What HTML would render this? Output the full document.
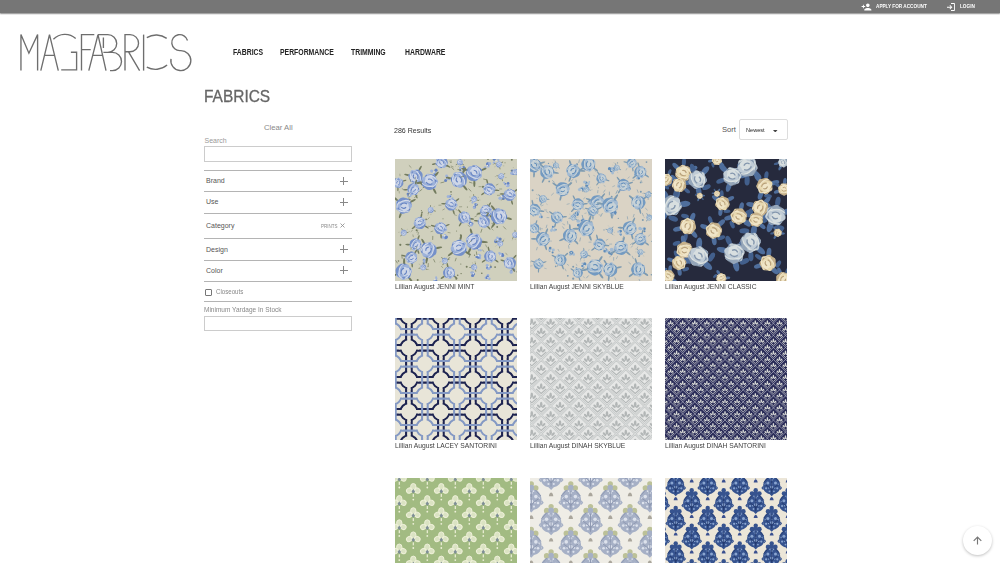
<!DOCTYPE html>
<html><head><meta charset="utf-8">
<style>
*{margin:0;padding:0;box-sizing:border-box}
html,body{width:1000px;height:563px;overflow:hidden;background:#fff;font-family:"Liberation Sans",sans-serif;position:relative}
.a{position:absolute;white-space:nowrap}
svg{display:block}
#topbar{position:absolute;left:0;top:0;width:1000px;height:12.6px;background:#767676;box-shadow:0 .8px 1.2px rgba(0,0,0,.45)}
.tb{color:#fff;font-size:5.5px;font-weight:bold;top:2.9px;transform:scaleX(.85);transform-origin:0 0}
.nav{font-size:8.4px;font-weight:bold;color:#222;top:47px;transform:scaleX(.82);transform-origin:0 0}
.side{color:#555;font-size:7px}
.hr{position:absolute;left:204px;width:148px;height:1px;background:#b4b4b4}
.plus{position:absolute;width:8px;height:8px}
.plus:before{content:"";position:absolute;left:3px;top:0;width:1px;height:7.5px;background:#888}
.plus:after{content:"";position:absolute;left:0;top:3.5px;width:7.5px;height:1px;background:#888}
.img{position:absolute;width:122px;height:122px;overflow:hidden}
.lbl{font-size:7.4px;color:#404040;transform:scaleX(.91);transform-origin:0 0}
</style></head><body>
<div id="topbar"></div>
<svg class="a" style="left:861px;top:3px" width="11" height="8" viewBox="0 0 24 18"><path fill="#fff" d="M15 9c2.2 0 4-1.8 4-4s-1.8-4-4-4-4 1.8-4 4 1.8 4 4 4zM6 7V4H4v3H1v2h3v3h2V9h3V7H6zm9 4c-2.7 0-8 1.3-8 4v2h16v-2c0-2.7-5.3-4-8-4z"/></svg>
<div class="a tb" style="left:875.5px">APPLY FOR ACCOUNT</div>
<svg class="a" style="left:946.5px;top:2.5px" width="8" height="8" viewBox="0 0 18 18"><path fill="#fff" d="M7 4.5L5.6 5.9 8.2 8.5H0v2h8.2l-2.6 2.6L7 14.5l5-5-5-5zM16 16H9v2h7c1.1 0 2-.9 2-2V2c0-1.1-.9-2-2-2H9v2h7v14z"/></svg>
<div class="a tb" style="left:960px">LOGIN</div>

<svg class="a" style="left:0;top:0" width="200" height="80" viewBox="0 0 200 80"><g fill="none" stroke="#6e6e6e" stroke-width="1.35" stroke-linecap="butt" stroke-linejoin="miter">
<path d="M20.95 70.6V34.6L28.9 53.2L37.6 34.6V70.6"/>
<path d="M40.8 70.6L49.5 34.6L58.3 70.6M44.5 55.4H54.6"/>
<path d="M53.4 39.2A16.2 16.2 0 0 1 75.7 38.4M61.2 69.9H76.6V52.2H70.9"/>
<path d="M94.3 34.6H81.5V70.4M81.5 49.6H90.7"/>
<path d="M88.8 70.6L98 34.6L106 70.6M92.7 55.4H102.6"/>
<path d="M98 34.6H107.8A8.9 8.9 0 0 1 107.8 52.4H103.4M103.4 37.6V48M103.4 52.4H112.4A9.1 9.1 0 0 1 112.4 70.6H110"/>
<path d="M125 70.6V34.6H130A8.55 8.55 0 0 1 130 51.7H125M128.4 51.7L139.6 70.6"/>
<path d="M143.6 34.6V70.6"/>
<path d="M146.8 37.6A18 18 0 0 1 166.7 38.4M146.8 67.1A18 18 0 0 0 167.1 65.1"/>
<path d="M187.5 40.5A8 8 0 1 0 180.3 50.6A10 10 0 1 1 171 58.8"/>
</g></svg>

<div class="a nav" style="left:233.2px">FABRICS</div>
<div class="a nav" style="left:279.5px">PERFORMANCE</div>
<div class="a nav" style="left:351.4px">TRIMMING</div>
<div class="a nav" style="left:405.4px">HARDWARE</div>

<div class="a" style="left:204.3px;top:87.2px;font-size:17px;color:#666;-webkit-text-stroke:.3px #666;transform:scaleX(.91);transform-origin:0 0">FABRICS</div>

<div class="a side" style="left:264px;top:123px;font-size:7.7px;color:#888">Clear All</div>
<div class="a side" style="left:204.5px;top:137px;color:#999">Search</div>
<div class="a" style="left:204px;top:146px;width:148px;height:16px;border:1px solid #ccc"></div>

<div class="hr" style="top:170px"></div>
<div class="a side" style="left:206px;top:177px">Brand</div>
<div class="plus" style="left:340px;top:177px"></div>
<div class="hr" style="top:191px"></div>
<div class="a side" style="left:206px;top:198px">Use</div>
<div class="plus" style="left:340px;top:198px"></div>
<div class="hr" style="top:212.5px;height:1.5px"></div>
<div class="a side" style="left:206px;top:222px">Category</div>
<div class="a" style="left:321.3px;top:222.8px;font-size:5px;color:#888;transform:scaleX(.9);transform-origin:0 0">PRINTS</div>
<svg class="a" style="left:340px;top:223.3px" width="5" height="5" viewBox="0 0 5 5"><path d="M.5 .5L4.5 4.5M4.5 .5L.5 4.5" stroke="#888" stroke-width=".8"/></svg>
<div class="hr" style="top:238px"></div>
<div class="a side" style="left:206px;top:246px">Design</div>
<div class="plus" style="left:340px;top:245px"></div>
<div class="hr" style="top:259.5px"></div>
<div class="a side" style="left:206px;top:267px">Color</div>
<div class="plus" style="left:340px;top:266px"></div>
<div class="hr" style="top:281px"></div>
<div class="a" style="left:204.5px;top:288.5px;width:7px;height:7px;border:1px solid #777;border-radius:1px"></div>
<div class="a side" style="left:215.5px;top:288.3px;color:#888;font-size:6.6px;transform:scaleX(.93);transform-origin:0 0">Closeouts</div>
<div class="hr" style="top:300.5px"></div>
<div class="a side" style="left:204px;top:306.2px;color:#888;transform:scaleX(.93);transform-origin:0 0">Minimum Yardage In Stock</div>
<div class="a" style="left:204px;top:315.5px;width:148px;height:15px;border:1px solid #ccc"></div>

<div class="a" style="left:394px;top:125.5px;font-size:7.6px;color:#333;transform:scaleX(.93);transform-origin:0 0">286 Results</div>
<div class="a" style="left:722px;top:125.3px;font-size:7.6px;color:#555">Sort</div>
<div class="a" style="left:739.3px;top:119.2px;width:48.7px;height:20.9px;border:1px solid #ddd;border-radius:2px"></div>
<div class="a" style="left:746px;top:126.8px;font-size:6px;color:#222;transform:scaleX(.93);transform-origin:0 0">Newest</div>
<svg class="a" style="left:773px;top:129.5px" width="4.5" height="2.5" viewBox="0 0 4.5 2.5"><path d="M0 0H4.5L2.25 2.5Z" fill="#444"/></svg>

<div class="img" style="left:395px;top:159px"><svg width="122" height="122" viewBox="0 0 122 122"><defs><g id="rm"><ellipse cx="-11" cy="6" rx="4.5" ry="1.3" fill="#737b5e" transform="rotate(-30 -11 6)"/><ellipse cx="10" cy="8" rx="4.5" ry="1.3" fill="#737b5e" transform="rotate(40 10 8)"/><ellipse cx="4" cy="-12" rx="4" ry="1.3" fill="#737b5e" transform="rotate(-70 4 -12)"/><path d="M-13 10L-17 13M13 -4L17 -7M-5 12L-7 16" stroke="#737b5e" stroke-width=".8"/><path d="M9.2 0L9.4 1.4L9.7 3L9.5 4.6L8.4 5.7L7 6.5L5.8 7.2L4.8 8.3L3.7 9.5L2.3 10.2L0.8 10.2L-0.7 9.5L-2.1 9L-3.5 8.9L-5.1 8.8L-6.5 8.2L-7.5 6.9L-7.9 5.4L-8.3 4L-9.1 2.8L-10.1 1.5L-10.5 0L-10.1 -1.5L-9.1 -2.8L-8.3 -4L-7.9 -5.4L-7.5 -6.9L-6.5 -8.2L-5.1 -8.8L-3.5 -8.9L-2.1 -9L-0.7 -9.5L0.8 -10.2L2.3 -10.2L3.7 -9.5L4.8 -8.3L5.8 -7.2L7 -6.5L8.4 -5.7L9.5 -4.6L9.7 -3L9.4 -1.4L9.2 -0Z" fill="#9db2da"/><path d="M-10 1A10 10 0 0 0 8 6Q2 4 -2 7Q-6 6 -10 1Z" fill="#6482c2" opacity=".7"/><path d="M4.4 1.9L4.2 2.9L3.9 4.2L3.1 5.1L1.9 5.4L0.6 5.1L-0.4 4.8L-1.5 4.9L-2.8 5L-3.9 4.5L-4.5 3.4L-4.6 2.2L-4.7 1.1L-5.1 0.1L-5.6 -1.1L-5.5 -2.3L-4.7 -3.3L-3.5 -3.7L-2.5 -4.1L-1.7 -4.8L-0.7 -5.7L0.5 -6L1.7 -5.5L2.5 -4.5L3.1 -3.6L4.1 -3.1L5.2 -2.4L5.8 -1.4L5.7 -0.1L5 1L4.4 1.9Z" fill="#e2e5ec" opacity=".7" transform="translate(-1.5 -2)"/><path d="M-8 -4Q-4 -10 4 -9M5 -6Q10 -1 7 6M-3 -2Q0 -5 3 -2M-4 2Q0 5 4 1" stroke="#6482c2" stroke-width="1.4" fill="none"/><path d="M-6.5 -6.5Q0 -10 6.5 -5.5M-8 5Q-2 9 6 3M8 -3Q9 1 6 4" stroke="#e2e5ec" stroke-width="1.3" fill="none" opacity=".85"/></g><filter id="bl5" x="-5%" y="-5%" width="110%" height="110%"><feGaussianBlur stdDeviation="0.5"/></filter></defs><g filter="url(#bl5)"><rect x="-5" y="-5" width="132" height="132" fill="#d0d0bd"/><circle cx="16.4" cy="103.4" r="1" fill="#737b5e"/><circle cx="31.1" cy="60.4" r="0.8" fill="#737b5e"/><circle cx="79.5" cy="96.2" r="0.6" fill="#737b5e"/><circle cx="3.5" cy="102" r="0.8" fill="#737b5e"/><circle cx="93" cy="0.3" r="0.8" fill="#737b5e"/><circle cx="88" cy="27.9" r="1.1" fill="#737b5e"/><circle cx="110" cy="3.7" r="0.5" fill="#737b5e"/><circle cx="66.1" cy="114.6" r="0.7" fill="#737b5e"/><circle cx="26.4" cy="51.5" r="0.5" fill="#737b5e"/><circle cx="27" cy="53.4" r="0.8" fill="#737b5e"/><circle cx="28.4" cy="28.2" r="0.6" fill="#737b5e"/><circle cx="56.1" cy="35.4" r="0.5" fill="#737b5e"/><circle cx="102.2" cy="67.9" r="0.9" fill="#737b5e"/><circle cx="22.7" cy="121.1" r="1" fill="#737b5e"/><circle cx="14.7" cy="40.6" r="0.9" fill="#737b5e"/><circle cx="86.8" cy="114.2" r="0.8" fill="#737b5e"/><circle cx="101.3" cy="81.8" r="0.7" fill="#737b5e"/><circle cx="71.7" cy="107.7" r="1" fill="#737b5e"/><circle cx="61.6" cy="71.9" r="0.5" fill="#737b5e"/><circle cx="29.6" cy="97.3" r="0.7" fill="#737b5e"/><circle cx="21.1" cy="67" r="0.9" fill="#737b5e"/><circle cx="82.3" cy="45.7" r="0.8" fill="#737b5e"/><circle cx="62" cy="95" r="0.8" fill="#737b5e"/><circle cx="48" cy="59.7" r="0.5" fill="#737b5e"/><circle cx="5.3" cy="85.8" r="1.1" fill="#737b5e"/><circle cx="72.4" cy="48" r="0.6" fill="#737b5e"/><circle cx="61.3" cy="119.8" r="1" fill="#737b5e"/><circle cx="65.8" cy="105" r="0.6" fill="#737b5e"/><circle cx="62.7" cy="116.2" r="0.8" fill="#737b5e"/><circle cx="56" cy="32.9" r="0.8" fill="#737b5e"/><circle cx="116.8" cy="0.7" r="1" fill="#737b5e"/><circle cx="100.1" cy="108.1" r="0.9" fill="#737b5e"/><circle cx="98.7" cy="63.3" r="0.8" fill="#737b5e"/><circle cx="52" cy="6.8" r="1" fill="#737b5e"/><circle cx="69.5" cy="24.4" r="0.8" fill="#737b5e"/><circle cx="59.2" cy="43.5" r="0.7" fill="#737b5e"/><circle cx="65.7" cy="76.1" r="0.9" fill="#737b5e"/><circle cx="55.9" cy="3.4" r="0.6" fill="#737b5e"/><circle cx="21.6" cy="71.3" r="1" fill="#737b5e"/><circle cx="97.4" cy="97.2" r="1" fill="#737b5e"/><circle cx="32" cy="100.6" r="0.9" fill="#9db2da"/><circle cx="28.7" cy="104" r="1.1" fill="#6482c2"/><circle cx="29.2" cy="103.3" r="1.2" fill="#9db2da"/><circle cx="29" cy="101" r="1.3" fill="#6482c2"/><circle cx="29.5" cy="101.6" r="1.5" fill="#9db2da"/><circle cx="31.1" cy="102.7" r=".7" fill="#e2e5ec"/><circle cx="55.3" cy="36.9" r="1.2" fill="#9db2da"/><circle cx="55.1" cy="37.7" r="1" fill="#6482c2"/><circle cx="57.5" cy="39.3" r="1.1" fill="#9db2da"/><circle cx="56" cy="40.9" r="0.9" fill="#6482c2"/><circle cx="53.1" cy="37.5" r="1.5" fill="#9db2da"/><circle cx="55.5" cy="39.3" r=".7" fill="#e2e5ec"/><circle cx="20.4" cy="86.2" r="1.1" fill="#9db2da"/><circle cx="21.9" cy="87.5" r="1.3" fill="#6482c2"/><circle cx="18.2" cy="86.7" r="1.2" fill="#9db2da"/><circle cx="19.9" cy="85.1" r="1.4" fill="#6482c2"/><circle cx="17.3" cy="85" r="1.7" fill="#9db2da"/><circle cx="19.5" cy="86" r=".7" fill="#e2e5ec"/><circle cx="108.6" cy="36.4" r="1.7" fill="#9db2da"/><circle cx="108" cy="37" r="1.1" fill="#6482c2"/><circle cx="104.4" cy="39.3" r="0.9" fill="#9db2da"/><circle cx="108.4" cy="39.7" r="1.4" fill="#6482c2"/><circle cx="105.2" cy="39.2" r="1.7" fill="#9db2da"/><circle cx="106.8" cy="37.4" r=".7" fill="#e2e5ec"/><circle cx="85.3" cy="61.3" r="1.1" fill="#9db2da"/><circle cx="86.8" cy="61.7" r="1.1" fill="#6482c2"/><circle cx="83.9" cy="62.9" r="1.1" fill="#9db2da"/><circle cx="85.9" cy="61.2" r="1.6" fill="#6482c2"/><circle cx="87.9" cy="59.7" r="1.1" fill="#9db2da"/><circle cx="85.9" cy="62.1" r=".7" fill="#e2e5ec"/><circle cx="41.4" cy="119.6" r="1.1" fill="#9db2da"/><circle cx="40.9" cy="122.1" r="1.6" fill="#6482c2"/><circle cx="39.2" cy="122.3" r="1.4" fill="#9db2da"/><circle cx="39.9" cy="122.8" r="1.1" fill="#6482c2"/><circle cx="41.1" cy="118.3" r="1" fill="#9db2da"/><circle cx="40" cy="120.4" r=".7" fill="#e2e5ec"/><circle cx="112.4" cy="26.5" r="1.6" fill="#9db2da"/><circle cx="110.5" cy="25.2" r="1.1" fill="#6482c2"/><circle cx="113" cy="26.5" r="1.7" fill="#9db2da"/><circle cx="113.1" cy="24.2" r="1.3" fill="#6482c2"/><circle cx="109.2" cy="23.7" r="1" fill="#9db2da"/><circle cx="111.1" cy="26" r=".7" fill="#e2e5ec"/><circle cx="107.3" cy="95.4" r="1.4" fill="#9db2da"/><circle cx="107.1" cy="95.5" r="1.4" fill="#6482c2"/><circle cx="104.3" cy="94.1" r="1.1" fill="#9db2da"/><circle cx="107.6" cy="96.5" r="1.6" fill="#6482c2"/><circle cx="105.5" cy="95" r="1.5" fill="#9db2da"/><circle cx="105.7" cy="96.2" r=".7" fill="#e2e5ec"/><circle cx="101.8" cy="-0.5" r="1" fill="#9db2da"/><circle cx="102.9" cy="-0.8" r="1.1" fill="#6482c2"/><circle cx="103.4" cy="1.1" r="1" fill="#9db2da"/><circle cx="99.3" cy="0.2" r="1.5" fill="#6482c2"/><circle cx="99" cy="3.6" r="1.2" fill="#9db2da"/><circle cx="101" cy="1.5" r=".7" fill="#e2e5ec"/><circle cx="117.3" cy="109.7" r="1.3" fill="#9db2da"/><circle cx="116.4" cy="111.7" r="0.9" fill="#6482c2"/><circle cx="115.9" cy="113.3" r="1.1" fill="#9db2da"/><circle cx="118.9" cy="110.7" r="1.2" fill="#6482c2"/><circle cx="116.2" cy="113" r="1.7" fill="#9db2da"/><circle cx="118.4" cy="110.9" r=".7" fill="#e2e5ec"/><circle cx="116.9" cy="14.2" r="1.7" fill="#9db2da"/><circle cx="118.5" cy="14.5" r="1.4" fill="#6482c2"/><circle cx="117.1" cy="13.8" r="1.1" fill="#9db2da"/><circle cx="117" cy="11.5" r="1.1" fill="#6482c2"/><circle cx="120.7" cy="13.3" r="1.4" fill="#9db2da"/><circle cx="118.3" cy="13.6" r=".7" fill="#e2e5ec"/><circle cx="78" cy="113.8" r="1.2" fill="#9db2da"/><circle cx="77.6" cy="116.5" r="1.6" fill="#6482c2"/><circle cx="77.5" cy="113.9" r="1.3" fill="#9db2da"/><circle cx="78.9" cy="115.2" r="1.1" fill="#6482c2"/><circle cx="76.1" cy="113.5" r="1" fill="#9db2da"/><circle cx="78.5" cy="114.8" r=".7" fill="#e2e5ec"/><circle cx="65.1" cy="9.3" r="1.1" fill="#9db2da"/><circle cx="68.7" cy="8.6" r="1.6" fill="#6482c2"/><circle cx="65.5" cy="8.7" r="1.5" fill="#9db2da"/><circle cx="65.1" cy="10.9" r="1" fill="#6482c2"/><circle cx="68.6" cy="11.1" r="1.6" fill="#9db2da"/><circle cx="67.2" cy="8.7" r=".7" fill="#e2e5ec"/><circle cx="39.1" cy="15.1" r="1.1" fill="#9db2da"/><circle cx="41" cy="11.2" r="1.6" fill="#6482c2"/><circle cx="36.7" cy="12.1" r="1.6" fill="#9db2da"/><circle cx="40.5" cy="15.1" r="1.6" fill="#6482c2"/><circle cx="40.2" cy="14" r="1" fill="#9db2da"/><circle cx="39" cy="13" r=".7" fill="#e2e5ec"/><circle cx="53.9" cy="20.1" r="1.1" fill="#9db2da"/><circle cx="50.6" cy="21.6" r="1.5" fill="#6482c2"/><circle cx="53" cy="19.5" r="1.6" fill="#9db2da"/><circle cx="52.5" cy="18.7" r="1.2" fill="#6482c2"/><circle cx="51.6" cy="16.9" r="1.4" fill="#9db2da"/><circle cx="52.8" cy="19.3" r=".7" fill="#e2e5ec"/><circle cx="48.6" cy="68.9" r="1" fill="#9db2da"/><circle cx="49" cy="68.4" r="1.6" fill="#6482c2"/><circle cx="50.3" cy="69.1" r="1.4" fill="#9db2da"/><circle cx="49.5" cy="67.2" r="1.3" fill="#6482c2"/><circle cx="50.8" cy="70.4" r="1.3" fill="#9db2da"/><circle cx="50.8" cy="69.6" r=".7" fill="#e2e5ec"/><circle cx="82.4" cy="89.2" r="1.3" fill="#9db2da"/><circle cx="82.4" cy="88.8" r="1.3" fill="#6482c2"/><circle cx="85.8" cy="91.3" r="1.1" fill="#9db2da"/><circle cx="84.5" cy="87" r="1" fill="#6482c2"/><circle cx="83.8" cy="91.1" r="1" fill="#9db2da"/><circle cx="83.8" cy="89.2" r=".7" fill="#e2e5ec"/><circle cx="92.5" cy="108.7" r="1.6" fill="#9db2da"/><circle cx="92.8" cy="108.7" r="1.5" fill="#6482c2"/><circle cx="93.9" cy="109.5" r="1.6" fill="#9db2da"/><circle cx="95.8" cy="108.1" r="1" fill="#6482c2"/><circle cx="92.2" cy="106.3" r="1.4" fill="#9db2da"/><circle cx="93.5" cy="107.7" r=".7" fill="#e2e5ec"/><circle cx="93.4" cy="7.4" r="1.2" fill="#9db2da"/><circle cx="92.5" cy="4.7" r="1.5" fill="#6482c2"/><circle cx="90.1" cy="8.8" r="1.5" fill="#9db2da"/><circle cx="93.1" cy="5.2" r="1.6" fill="#6482c2"/><circle cx="94.7" cy="4.6" r="1.5" fill="#9db2da"/><circle cx="92.4" cy="6.4" r=".7" fill="#e2e5ec"/><circle cx="103.7" cy="80.2" r="1.6" fill="#9db2da"/><circle cx="105.1" cy="79.9" r="1.5" fill="#6482c2"/><circle cx="102.4" cy="78.8" r="1.2" fill="#9db2da"/><circle cx="100.8" cy="82.5" r="1.7" fill="#6482c2"/><circle cx="100.8" cy="81" r="1.2" fill="#9db2da"/><circle cx="102.7" cy="80.5" r=".7" fill="#e2e5ec"/><circle cx="13.1" cy="37.3" r="0.9" fill="#9db2da"/><circle cx="12.9" cy="35.7" r="0.9" fill="#6482c2"/><circle cx="15" cy="36.6" r="1.6" fill="#9db2da"/><circle cx="12.9" cy="35" r="1.3" fill="#6482c2"/><circle cx="13.3" cy="36.5" r="1.1" fill="#9db2da"/><circle cx="14.4" cy="36" r=".7" fill="#e2e5ec"/><circle cx="84.9" cy="98.9" r="1.3" fill="#9db2da"/><circle cx="83.3" cy="98.3" r="1.5" fill="#6482c2"/><circle cx="83.7" cy="95.9" r="1.1" fill="#9db2da"/><circle cx="81.4" cy="98.1" r="1" fill="#6482c2"/><circle cx="84.6" cy="96.7" r="1.7" fill="#9db2da"/><circle cx="83.4" cy="96.5" r=".7" fill="#e2e5ec"/><circle cx="91" cy="118.8" r="1.4" fill="#9db2da"/><circle cx="91.9" cy="118.8" r="1.2" fill="#6482c2"/><circle cx="93" cy="116.3" r="1.3" fill="#9db2da"/><circle cx="92.6" cy="117.8" r="1.2" fill="#6482c2"/><circle cx="94.3" cy="119.7" r="1.3" fill="#9db2da"/><circle cx="92.9" cy="118.8" r=".7" fill="#e2e5ec"/><circle cx="77.5" cy="43.6" r="1.1" fill="#9db2da"/><circle cx="79.5" cy="48" r="1.6" fill="#6482c2"/><circle cx="79.1" cy="48.5" r="1.3" fill="#9db2da"/><circle cx="80.7" cy="45.6" r="1.5" fill="#6482c2"/><circle cx="81.5" cy="45.1" r="1" fill="#9db2da"/><circle cx="79" cy="46.1" r=".7" fill="#e2e5ec"/><circle cx="74.9" cy="62.3" r="1.2" fill="#9db2da"/><circle cx="75.3" cy="64.3" r="1.6" fill="#6482c2"/><circle cx="76.1" cy="65.9" r="1.6" fill="#9db2da"/><circle cx="76.9" cy="64.7" r="1.5" fill="#6482c2"/><circle cx="76.3" cy="65.5" r="1.4" fill="#9db2da"/><circle cx="75.6" cy="64.8" r=".7" fill="#e2e5ec"/><circle cx="50.3" cy="79" r="1.5" fill="#9db2da"/><circle cx="51.4" cy="78.1" r="1.6" fill="#6482c2"/><circle cx="50.2" cy="76" r="1.1" fill="#9db2da"/><circle cx="50.7" cy="78.6" r="1.3" fill="#6482c2"/><circle cx="47.9" cy="78.4" r="1.3" fill="#9db2da"/><circle cx="49.7" cy="76.8" r=".7" fill="#e2e5ec"/><use href="#rm" transform="translate(46.6 3.3) rotate(239) scale(0.6)"/><use href="#rm" transform="translate(20.6 17.3) rotate(261) scale(0.7)"/><use href="#rm" transform="translate(34.7 22.8) rotate(23) scale(0.8)"/><use href="#rm" transform="translate(18.4 30.3) rotate(138) scale(0.6)"/><use href="#rm" transform="translate(63.9 20.6) rotate(261) scale(0.8)"/><use href="#rm" transform="translate(79.1 14.1) rotate(50) scale(0.8)"/><use href="#rm" transform="translate(3.3 23.8) rotate(302) scale(0.5)"/><use href="#rm" transform="translate(94.3 30.3) rotate(216) scale(0.6)"/><use href="#rm" transform="translate(114.8 35.8) rotate(35) scale(0.6)"/><use href="#rm" transform="translate(8.7 46.6) rotate(181) scale(0.8)"/><use href="#rm" transform="translate(56.3 45.5) rotate(34) scale(0.6)"/><use href="#rm" transform="translate(35.8 50.9) rotate(336) scale(0.3)"/><use href="#rm" transform="translate(79.1 40.1) rotate(226) scale(0.3)"/><use href="#rm" transform="translate(91 52) rotate(10) scale(0.6)"/><use href="#rm" transform="translate(104 57.4) rotate(84) scale(0.8)"/><use href="#rm" transform="translate(88.8 62.8) rotate(259) scale(0.6)"/><use href="#rm" transform="translate(69.3 58.5) rotate(82) scale(0.6)"/><use href="#rm" transform="translate(24.9 63.9) rotate(353) scale(0.6)"/><use href="#rm" transform="translate(45.5 69.3) rotate(47) scale(0.6)"/><use href="#rm" transform="translate(8.7 73.7) rotate(205) scale(0.3)"/><use href="#rm" transform="translate(79.1 82.3) rotate(325) scale(0.8)"/><use href="#rm" transform="translate(63.9 88.8) rotate(352) scale(0.8)"/><use href="#rm" transform="translate(20.6 85.6) rotate(141) scale(0.6)"/><use href="#rm" transform="translate(33.6 91) rotate(309) scale(0.8)"/><use href="#rm" transform="translate(16.3 98.6) rotate(155) scale(0.6)"/><use href="#rm" transform="translate(95.3 97.5) rotate(106) scale(0.6)"/><use href="#rm" transform="translate(114.8 104) rotate(270) scale(0.6)"/><use href="#rm" transform="translate(54.2 113.8) rotate(106) scale(0.6)"/><use href="#rm" transform="translate(8.7 112.7) rotate(121) scale(0.8)"/><use href="#rm" transform="translate(105.1 84.5) rotate(170) scale(0.3)"/><use href="#rm" transform="translate(79.1 108.3) rotate(137) scale(0.3)"/><use href="#rm" transform="translate(106.2 17.3) rotate(35) scale(0.3)"/><use href="#rm" transform="translate(104 5.4) rotate(38) scale(0.3)"/><use href="#rm" transform="translate(65 3.3) rotate(357) scale(0.3)"/><use href="#rm" transform="translate(120.3 13) rotate(267) scale(0.3)"/><use href="#rm" transform="translate(120.3 75.8) rotate(337) scale(0.3)"/><use href="#rm" transform="translate(49.8 101.8) rotate(188) scale(0.3)"/><use href="#rm" transform="translate(28.2 108.3) rotate(239) scale(0.3)"/></g></svg></div>
<div class="img" style="left:530px;top:159px"><svg width="122" height="122" viewBox="0 0 122 122"><defs><g id="rs"><ellipse cx="-11" cy="6" rx="4.5" ry="1.3" fill="#7e9bb0" transform="rotate(-30 -11 6)"/><ellipse cx="10" cy="8" rx="4.5" ry="1.3" fill="#7e9bb0" transform="rotate(40 10 8)"/><ellipse cx="4" cy="-12" rx="4" ry="1.3" fill="#7e9bb0" transform="rotate(-70 4 -12)"/><path d="M-13 10L-17 13M13 -4L17 -7M-5 12L-7 16" stroke="#7e9bb0" stroke-width=".8"/><path d="M9.2 0L9.4 1.4L9.7 3L9.5 4.6L8.4 5.7L7 6.5L5.8 7.2L4.8 8.3L3.7 9.5L2.3 10.2L0.8 10.2L-0.7 9.5L-2.1 9L-3.5 8.9L-5.1 8.8L-6.5 8.2L-7.5 6.9L-7.9 5.4L-8.3 4L-9.1 2.8L-10.1 1.5L-10.5 0L-10.1 -1.5L-9.1 -2.8L-8.3 -4L-7.9 -5.4L-7.5 -6.9L-6.5 -8.2L-5.1 -8.8L-3.5 -8.9L-2.1 -9L-0.7 -9.5L0.8 -10.2L2.3 -10.2L3.7 -9.5L4.8 -8.3L5.8 -7.2L7 -6.5L8.4 -5.7L9.5 -4.6L9.7 -3L9.4 -1.4L9.2 -0Z" fill="#a4bbd2"/><path d="M-10 1A10 10 0 0 0 8 6Q2 4 -2 7Q-6 6 -10 1Z" fill="#5e8bb9" opacity=".7"/><path d="M4.4 1.9L4.2 2.9L3.9 4.2L3.1 5.1L1.9 5.4L0.6 5.1L-0.4 4.8L-1.5 4.9L-2.8 5L-3.9 4.5L-4.5 3.4L-4.6 2.2L-4.7 1.1L-5.1 0.1L-5.6 -1.1L-5.5 -2.3L-4.7 -3.3L-3.5 -3.7L-2.5 -4.1L-1.7 -4.8L-0.7 -5.7L0.5 -6L1.7 -5.5L2.5 -4.5L3.1 -3.6L4.1 -3.1L5.2 -2.4L5.8 -1.4L5.7 -0.1L5 1L4.4 1.9Z" fill="#d6dbd8" opacity=".7" transform="translate(-1.5 -2)"/><path d="M-8 -4Q-4 -10 4 -9M5 -6Q10 -1 7 6M-3 -2Q0 -5 3 -2M-4 2Q0 5 4 1" stroke="#5e8bb9" stroke-width="1.4" fill="none"/><path d="M-6.5 -6.5Q0 -10 6.5 -5.5M-8 5Q-2 9 6 3M8 -3Q9 1 6 4" stroke="#d6dbd8" stroke-width="1.3" fill="none" opacity=".85"/></g><filter id="bl5" x="-5%" y="-5%" width="110%" height="110%"><feGaussianBlur stdDeviation="0.5"/></filter></defs><g filter="url(#bl5)"><rect x="-5" y="-5" width="132" height="132" fill="#dad3c5"/><circle cx="116.6" cy="115.6" r="0.5" fill="#7e9bb0"/><circle cx="10.4" cy="101.9" r="0.9" fill="#7e9bb0"/><circle cx="81.7" cy="37.6" r="0.9" fill="#7e9bb0"/><circle cx="74" cy="70.9" r="0.6" fill="#7e9bb0"/><circle cx="52.5" cy="48" r="0.9" fill="#7e9bb0"/><circle cx="121.4" cy="115.8" r="0.8" fill="#7e9bb0"/><circle cx="54.3" cy="32.7" r="0.5" fill="#7e9bb0"/><circle cx="3.3" cy="56.7" r="0.7" fill="#7e9bb0"/><circle cx="46.4" cy="108.8" r="0.8" fill="#7e9bb0"/><circle cx="68.4" cy="28.8" r="0.5" fill="#7e9bb0"/><circle cx="39.7" cy="16.7" r="0.8" fill="#7e9bb0"/><circle cx="121.8" cy="82.3" r="0.6" fill="#7e9bb0"/><circle cx="109" cy="97.2" r="0.9" fill="#7e9bb0"/><circle cx="110.6" cy="93.1" r="1" fill="#7e9bb0"/><circle cx="43.2" cy="119.7" r="1.1" fill="#7e9bb0"/><circle cx="19.7" cy="92" r="0.9" fill="#7e9bb0"/><circle cx="56.3" cy="64.7" r="0.8" fill="#7e9bb0"/><circle cx="112.8" cy="61.1" r="1" fill="#7e9bb0"/><circle cx="43.2" cy="107.7" r="1" fill="#7e9bb0"/><circle cx="56.2" cy="69.3" r="1.1" fill="#7e9bb0"/><circle cx="88.3" cy="59.4" r="0.6" fill="#7e9bb0"/><circle cx="39.6" cy="85.3" r="0.6" fill="#7e9bb0"/><circle cx="110.8" cy="32.7" r="1" fill="#7e9bb0"/><circle cx="37.8" cy="116.8" r="0.9" fill="#7e9bb0"/><circle cx="61.5" cy="63.2" r="0.9" fill="#7e9bb0"/><circle cx="71.7" cy="38" r="0.6" fill="#7e9bb0"/><circle cx="62.5" cy="114" r="0.9" fill="#7e9bb0"/><circle cx="9.2" cy="100.1" r="0.9" fill="#7e9bb0"/><circle cx="110.7" cy="23.4" r="0.9" fill="#7e9bb0"/><circle cx="7.2" cy="79.7" r="0.7" fill="#7e9bb0"/><circle cx="27.6" cy="106.8" r="0.6" fill="#7e9bb0"/><circle cx="63.7" cy="104.2" r="0.6" fill="#7e9bb0"/><circle cx="25.7" cy="107.4" r="0.8" fill="#7e9bb0"/><circle cx="87.5" cy="3.9" r="0.7" fill="#7e9bb0"/><circle cx="21" cy="82.1" r="0.5" fill="#7e9bb0"/><circle cx="116.5" cy="3.1" r="0.9" fill="#7e9bb0"/><circle cx="2.6" cy="31.2" r="1" fill="#7e9bb0"/><circle cx="19.2" cy="22.4" r="0.9" fill="#7e9bb0"/><circle cx="47" cy="5.3" r="1.1" fill="#7e9bb0"/><circle cx="18.5" cy="4.4" r="0.7" fill="#7e9bb0"/><circle cx="73.1" cy="89.8" r="0.9" fill="#a4bbd2"/><circle cx="74.8" cy="91.9" r="1.5" fill="#5e8bb9"/><circle cx="77.1" cy="91.9" r="1.6" fill="#a4bbd2"/><circle cx="76.1" cy="90.4" r="1.1" fill="#5e8bb9"/><circle cx="75.9" cy="89.7" r="1" fill="#a4bbd2"/><circle cx="75.1" cy="90.6" r=".7" fill="#d6dbd8"/><circle cx="52.8" cy="107.1" r="1.2" fill="#a4bbd2"/><circle cx="54.7" cy="104.9" r="1.7" fill="#5e8bb9"/><circle cx="53.4" cy="107.3" r="1.2" fill="#a4bbd2"/><circle cx="52.2" cy="107" r="1" fill="#5e8bb9"/><circle cx="52.4" cy="104.4" r="1" fill="#a4bbd2"/><circle cx="54.6" cy="106.7" r=".7" fill="#d6dbd8"/><circle cx="11.7" cy="79.9" r="1.6" fill="#a4bbd2"/><circle cx="14.2" cy="76.1" r="1.3" fill="#5e8bb9"/><circle cx="10.5" cy="77.9" r="1.4" fill="#a4bbd2"/><circle cx="13.2" cy="78.5" r="1.1" fill="#5e8bb9"/><circle cx="11.3" cy="77.6" r="0.9" fill="#a4bbd2"/><circle cx="11.7" cy="77.5" r=".7" fill="#d6dbd8"/><circle cx="2.4" cy="51" r="1.1" fill="#a4bbd2"/><circle cx="2.3" cy="48.3" r="1.1" fill="#5e8bb9"/><circle cx="2.9" cy="50" r="1.3" fill="#a4bbd2"/><circle cx="3.4" cy="50.6" r="1.1" fill="#5e8bb9"/><circle cx="6.4" cy="52.2" r="1.5" fill="#a4bbd2"/><circle cx="4.3" cy="49.9" r=".7" fill="#d6dbd8"/><circle cx="53.3" cy="60.2" r="1.2" fill="#a4bbd2"/><circle cx="53" cy="60.8" r="1" fill="#5e8bb9"/><circle cx="54.4" cy="61.7" r="1.3" fill="#a4bbd2"/><circle cx="55" cy="63" r="1.1" fill="#5e8bb9"/><circle cx="55.3" cy="61.8" r="0.9" fill="#a4bbd2"/><circle cx="52.9" cy="62.4" r=".7" fill="#d6dbd8"/><circle cx="82.6" cy="14" r="1.4" fill="#a4bbd2"/><circle cx="81.2" cy="12.1" r="1.2" fill="#5e8bb9"/><circle cx="83.5" cy="10.9" r="1.4" fill="#a4bbd2"/><circle cx="81.5" cy="11.3" r="1.2" fill="#5e8bb9"/><circle cx="85.8" cy="10.2" r="1.5" fill="#a4bbd2"/><circle cx="83.6" cy="12.3" r=".7" fill="#d6dbd8"/><circle cx="22.9" cy="69.5" r="1.5" fill="#a4bbd2"/><circle cx="22.9" cy="67.8" r="1" fill="#5e8bb9"/><circle cx="21.4" cy="71.5" r="1.4" fill="#a4bbd2"/><circle cx="25.8" cy="70.7" r="0.9" fill="#5e8bb9"/><circle cx="24.3" cy="71.1" r="1.5" fill="#a4bbd2"/><circle cx="23.5" cy="69.7" r=".7" fill="#d6dbd8"/><circle cx="60.5" cy="45.1" r="1.1" fill="#a4bbd2"/><circle cx="60.9" cy="43.5" r="1.7" fill="#5e8bb9"/><circle cx="62.3" cy="45.8" r="1.6" fill="#a4bbd2"/><circle cx="59.7" cy="42.3" r="1.3" fill="#5e8bb9"/><circle cx="59.5" cy="43.3" r="1.4" fill="#a4bbd2"/><circle cx="60.7" cy="43.6" r=".7" fill="#d6dbd8"/><circle cx="113.7" cy="69.5" r="1.2" fill="#a4bbd2"/><circle cx="114.6" cy="69.7" r="1.2" fill="#5e8bb9"/><circle cx="109.9" cy="69.4" r="1.6" fill="#a4bbd2"/><circle cx="114.5" cy="72.2" r="1" fill="#5e8bb9"/><circle cx="111" cy="70.1" r="1.4" fill="#a4bbd2"/><circle cx="112.1" cy="71.5" r=".7" fill="#d6dbd8"/><circle cx="83.2" cy="51.6" r="1.3" fill="#a4bbd2"/><circle cx="85.3" cy="54.8" r="1" fill="#5e8bb9"/><circle cx="83.2" cy="54.6" r="1.1" fill="#a4bbd2"/><circle cx="85.1" cy="53.3" r="1.5" fill="#5e8bb9"/><circle cx="82.6" cy="56" r="1.5" fill="#a4bbd2"/><circle cx="83.1" cy="53.5" r=".7" fill="#d6dbd8"/><circle cx="69.7" cy="15.3" r="1.4" fill="#a4bbd2"/><circle cx="71.9" cy="16.1" r="1.3" fill="#5e8bb9"/><circle cx="69.9" cy="17.2" r="1.5" fill="#a4bbd2"/><circle cx="72.1" cy="18.7" r="1.3" fill="#5e8bb9"/><circle cx="72.3" cy="16.8" r="1.5" fill="#a4bbd2"/><circle cx="70" cy="17.7" r=".7" fill="#d6dbd8"/><circle cx="82.1" cy="91.5" r="1.4" fill="#a4bbd2"/><circle cx="79.8" cy="93.8" r="1.7" fill="#5e8bb9"/><circle cx="81" cy="90.5" r="1.3" fill="#a4bbd2"/><circle cx="81.4" cy="94.8" r="1.4" fill="#5e8bb9"/><circle cx="81.9" cy="90.5" r="1.7" fill="#a4bbd2"/><circle cx="80.3" cy="92.9" r=".7" fill="#d6dbd8"/><circle cx="91" cy="75.9" r="1" fill="#a4bbd2"/><circle cx="90.6" cy="75.3" r="1.1" fill="#5e8bb9"/><circle cx="90.2" cy="74.4" r="1.1" fill="#a4bbd2"/><circle cx="90.5" cy="72.2" r="1.4" fill="#5e8bb9"/><circle cx="88.7" cy="72.8" r="1.4" fill="#a4bbd2"/><circle cx="89" cy="74" r=".7" fill="#d6dbd8"/><circle cx="59.3" cy="22.9" r="0.9" fill="#a4bbd2"/><circle cx="56.9" cy="26.7" r="1.4" fill="#5e8bb9"/><circle cx="58.3" cy="24.9" r="1.4" fill="#a4bbd2"/><circle cx="56.2" cy="23.8" r="1.3" fill="#5e8bb9"/><circle cx="54.6" cy="22.9" r="1.5" fill="#a4bbd2"/><circle cx="57" cy="25" r=".7" fill="#d6dbd8"/><circle cx="22.6" cy="91.1" r="1.4" fill="#a4bbd2"/><circle cx="22.6" cy="93.4" r="1" fill="#5e8bb9"/><circle cx="19.5" cy="90.9" r="1.3" fill="#a4bbd2"/><circle cx="20.2" cy="89.1" r="1.3" fill="#5e8bb9"/><circle cx="23.5" cy="90.9" r="1.3" fill="#a4bbd2"/><circle cx="21.2" cy="91.5" r=".7" fill="#d6dbd8"/><circle cx="48.5" cy="53.1" r="1.4" fill="#a4bbd2"/><circle cx="46.6" cy="54.2" r="1.6" fill="#5e8bb9"/><circle cx="44.5" cy="55.6" r="1.1" fill="#a4bbd2"/><circle cx="47.4" cy="55.5" r="1.4" fill="#5e8bb9"/><circle cx="46.1" cy="55.7" r="1" fill="#a4bbd2"/><circle cx="46.6" cy="54" r=".7" fill="#d6dbd8"/><circle cx="77.4" cy="49.5" r="1.5" fill="#a4bbd2"/><circle cx="77.9" cy="46.8" r="1.1" fill="#5e8bb9"/><circle cx="77.1" cy="46.4" r="1.1" fill="#a4bbd2"/><circle cx="79.6" cy="45.8" r="1.6" fill="#5e8bb9"/><circle cx="76.7" cy="47" r="1.2" fill="#a4bbd2"/><circle cx="77.3" cy="47.7" r=".7" fill="#d6dbd8"/><circle cx="7.8" cy="55.5" r="1.1" fill="#a4bbd2"/><circle cx="11.4" cy="57.9" r="1.3" fill="#5e8bb9"/><circle cx="10.1" cy="57.9" r="1.2" fill="#a4bbd2"/><circle cx="7.4" cy="54.5" r="1.1" fill="#5e8bb9"/><circle cx="10.3" cy="55.2" r="1.2" fill="#a4bbd2"/><circle cx="9.4" cy="55.8" r=".7" fill="#d6dbd8"/><circle cx="98.5" cy="29.1" r="1.2" fill="#a4bbd2"/><circle cx="98.6" cy="27.7" r="1.6" fill="#5e8bb9"/><circle cx="99.1" cy="28.5" r="1.5" fill="#a4bbd2"/><circle cx="99.2" cy="29.7" r="1.5" fill="#5e8bb9"/><circle cx="98.8" cy="30.6" r="1.5" fill="#a4bbd2"/><circle cx="97" cy="28.4" r=".7" fill="#d6dbd8"/><circle cx="120.1" cy="36.4" r="1.2" fill="#a4bbd2"/><circle cx="118.9" cy="33.9" r="1.7" fill="#5e8bb9"/><circle cx="118.7" cy="35.5" r="1.6" fill="#a4bbd2"/><circle cx="117.9" cy="37.9" r="1" fill="#5e8bb9"/><circle cx="117.1" cy="34.8" r="1.2" fill="#a4bbd2"/><circle cx="119.4" cy="35.6" r=".7" fill="#d6dbd8"/><circle cx="113.3" cy="107.4" r="1.3" fill="#a4bbd2"/><circle cx="110.6" cy="109.4" r="1.2" fill="#5e8bb9"/><circle cx="110.9" cy="108.4" r="1" fill="#a4bbd2"/><circle cx="111" cy="109.9" r="1" fill="#5e8bb9"/><circle cx="110.2" cy="106.3" r="1.1" fill="#a4bbd2"/><circle cx="112" cy="107.7" r=".7" fill="#d6dbd8"/><circle cx="50.5" cy="29.3" r="1.1" fill="#a4bbd2"/><circle cx="51.8" cy="29.7" r="1.2" fill="#5e8bb9"/><circle cx="52.6" cy="28.3" r="1" fill="#a4bbd2"/><circle cx="53" cy="30.2" r="1.5" fill="#5e8bb9"/><circle cx="49.5" cy="30.6" r="1.6" fill="#a4bbd2"/><circle cx="51.3" cy="30.5" r=".7" fill="#d6dbd8"/><circle cx="41.8" cy="93.2" r="1.7" fill="#a4bbd2"/><circle cx="40.7" cy="93.6" r="1.4" fill="#5e8bb9"/><circle cx="40.3" cy="95.4" r="1.4" fill="#a4bbd2"/><circle cx="41.7" cy="93.9" r="1.7" fill="#5e8bb9"/><circle cx="43.7" cy="95.4" r="1.3" fill="#a4bbd2"/><circle cx="41.2" cy="93.7" r=".7" fill="#d6dbd8"/><circle cx="48" cy="62.1" r="1.7" fill="#a4bbd2"/><circle cx="48.4" cy="66.2" r="1.4" fill="#5e8bb9"/><circle cx="52.3" cy="61.9" r="1.1" fill="#a4bbd2"/><circle cx="51.7" cy="61.6" r="1" fill="#5e8bb9"/><circle cx="49.5" cy="62.4" r="1" fill="#a4bbd2"/><circle cx="50.2" cy="64" r=".7" fill="#d6dbd8"/><circle cx="84.1" cy="12" r="0.9" fill="#a4bbd2"/><circle cx="83.7" cy="9.9" r="1.3" fill="#5e8bb9"/><circle cx="82" cy="9.4" r="1.3" fill="#a4bbd2"/><circle cx="79.5" cy="9.7" r="1.6" fill="#5e8bb9"/><circle cx="83.3" cy="11.3" r="1.4" fill="#a4bbd2"/><circle cx="81.7" cy="11.2" r=".7" fill="#d6dbd8"/><circle cx="106.8" cy="15.2" r="1" fill="#a4bbd2"/><circle cx="104.9" cy="15.6" r="0.9" fill="#5e8bb9"/><circle cx="105.4" cy="16.5" r="1.4" fill="#a4bbd2"/><circle cx="108.6" cy="19.1" r="1.5" fill="#5e8bb9"/><circle cx="106.8" cy="19.2" r="1" fill="#a4bbd2"/><circle cx="106.8" cy="17.1" r=".7" fill="#d6dbd8"/><use href="#rs" transform="translate(4.3 6.5) rotate(53) scale(0.7)"/><use href="#rs" transform="translate(17.3 13) rotate(77) scale(0.7)"/><use href="#rs" transform="translate(43.3 11.9) rotate(321) scale(0.7)"/><use href="#rs" transform="translate(58.5 5.4) rotate(107) scale(0.7)"/><use href="#rs" transform="translate(71.5 19.5) rotate(88) scale(0.5)"/><use href="#rs" transform="translate(93.2 26) rotate(193) scale(0.6)"/><use href="#rs" transform="translate(110.5 13) rotate(103) scale(0.6)"/><use href="#rs" transform="translate(101.8 4.3) rotate(152) scale(0.5)"/><use href="#rs" transform="translate(32.5 30.3) rotate(174) scale(0.7)"/><use href="#rs" transform="translate(56.3 30.3) rotate(220) scale(0.3)"/><use href="#rs" transform="translate(13 40.1) rotate(73) scale(0.4)"/><use href="#rs" transform="translate(4.3 50.9) rotate(218) scale(0.6)"/><use href="#rs" transform="translate(27.1 58.5) rotate(66) scale(0.6)"/><use href="#rs" transform="translate(47.7 45.5) rotate(203) scale(0.6)"/><use href="#rs" transform="translate(67.2 43.3) rotate(160) scale(0.7)"/><use href="#rs" transform="translate(80.2 46.6) rotate(153) scale(0.8)"/><use href="#rs" transform="translate(62.8 52) rotate(50) scale(0.5)"/><use href="#rs" transform="translate(108.3 43.3) rotate(287) scale(0.7)"/><use href="#rs" transform="translate(118.1 35.8) rotate(51) scale(0.3)"/><use href="#rs" transform="translate(43.3 58.5) rotate(242) scale(0.3)"/><use href="#rs" transform="translate(56.3 69.3) rotate(139) scale(0.8)"/><use href="#rs" transform="translate(99.7 69.3) rotate(145) scale(0.7)"/><use href="#rs" transform="translate(80.2 71.5) rotate(270) scale(0.3)"/><use href="#rs" transform="translate(4.3 69.3) rotate(250) scale(0.5)"/><use href="#rs" transform="translate(13 80.2) rotate(143) scale(0.7)"/><use href="#rs" transform="translate(40.1 76.9) rotate(117) scale(0.7)"/><use href="#rs" transform="translate(69.3 85.6) rotate(215) scale(0.6)"/><use href="#rs" transform="translate(91 88.8) rotate(359) scale(0.7)"/><use href="#rs" transform="translate(110.5 93.2) rotate(70) scale(0.3)"/><use href="#rs" transform="translate(110.5 80.2) rotate(357) scale(0.6)"/><use href="#rs" transform="translate(30.3 100.8) rotate(280) scale(0.6)"/><use href="#rs" transform="translate(54.2 95.3) rotate(337) scale(0.4)"/><use href="#rs" transform="translate(8.7 105.1) rotate(53) scale(0.5)"/><use href="#rs" transform="translate(65 108.3) rotate(15) scale(0.8)"/><use href="#rs" transform="translate(80.2 110.5) rotate(308) scale(0.7)"/><use href="#rs" transform="translate(47.7 113.8) rotate(282) scale(0.5)"/><use href="#rs" transform="translate(108.3 110.5) rotate(103) scale(0.7)"/><use href="#rs" transform="translate(26 6.5) rotate(108) scale(0.3)"/><use href="#rs" transform="translate(86.7 8.7) rotate(99) scale(0.3)"/><use href="#rs" transform="translate(119.2 58.5) rotate(200) scale(0.3)"/></g></svg></div>
<div class="img" style="left:665px;top:159px"><svg width="122" height="122" viewBox="0 0 122 122"><defs><g id="lf"><ellipse cx="-12" cy="3" rx="6" ry="3" fill="#4f6e9c" transform="rotate(-20 -12 3)"/><ellipse cx="11" cy="7" rx="6" ry="3" fill="#4f6e9c" transform="rotate(35 11 7)"/><ellipse cx="2" cy="-12" rx="6" ry="2.8" fill="#4f6e9c" transform="rotate(-80 2 -12)"/><ellipse cx="-7" cy="11" rx="5" ry="2.6" fill="#435f8c" transform="rotate(60 -7 11)"/><ellipse cx="12" cy="-7" rx="5" ry="2.6" fill="#435f8c" transform="rotate(-30 12 -7)"/></g><g id="ry"><path d="M9.2 0L9.4 1.4L9.7 3L9.5 4.6L8.4 5.7L7 6.5L5.8 7.2L4.8 8.3L3.7 9.5L2.3 10.2L0.8 10.2L-0.7 9.5L-2.1 9L-3.5 8.9L-5.1 8.8L-6.5 8.2L-7.5 6.9L-7.9 5.4L-8.3 4L-9.1 2.8L-10.1 1.5L-10.5 0L-10.1 -1.5L-9.1 -2.8L-8.3 -4L-7.9 -5.4L-7.5 -6.9L-6.5 -8.2L-5.1 -8.8L-3.5 -8.9L-2.1 -9L-0.7 -9.5L0.8 -10.2L2.3 -10.2L3.7 -9.5L4.8 -8.3L5.8 -7.2L7 -6.5L8.4 -5.7L9.5 -4.6L9.7 -3L9.4 -1.4L9.2 -0Z" fill="#e8d9b0"/><path d="M-10 1A10 10 0 0 0 8 6Q2 4 -2 7Q-6 6 -10 1Z" fill="#b8a07a" opacity=".7"/><path d="M4.4 1.9L4.2 2.9L3.9 4.2L3.1 5.1L1.9 5.4L0.6 5.1L-0.4 4.8L-1.5 4.9L-2.8 5L-3.9 4.5L-4.5 3.4L-4.6 2.2L-4.7 1.1L-5.1 0.1L-5.6 -1.1L-5.5 -2.3L-4.7 -3.3L-3.5 -3.7L-2.5 -4.1L-1.7 -4.8L-0.7 -5.7L0.5 -6L1.7 -5.5L2.5 -4.5L3.1 -3.6L4.1 -3.1L5.2 -2.4L5.8 -1.4L5.7 -0.1L5 1L4.4 1.9Z" fill="#f3ead2" opacity=".7" transform="translate(-1.5 -2)"/><path d="M-8 -4Q-4 -10 4 -9M5 -6Q10 -1 7 6M-3 -2Q0 -5 3 -2M-4 2Q0 5 4 1" stroke="#b8a07a" stroke-width="1.4" fill="none"/><path d="M-6.5 -6.5Q0 -10 6.5 -5.5M-8 5Q-2 9 6 3M8 -3Q9 1 6 4" stroke="#f3ead2" stroke-width="1.3" fill="none" opacity=".85"/></g><g id="rb"><path d="M9.2 0L9.4 1.4L9.7 3L9.5 4.6L8.4 5.7L7 6.5L5.8 7.2L4.8 8.3L3.7 9.5L2.3 10.2L0.8 10.2L-0.7 9.5L-2.1 9L-3.5 8.9L-5.1 8.8L-6.5 8.2L-7.5 6.9L-7.9 5.4L-8.3 4L-9.1 2.8L-10.1 1.5L-10.5 0L-10.1 -1.5L-9.1 -2.8L-8.3 -4L-7.9 -5.4L-7.5 -6.9L-6.5 -8.2L-5.1 -8.8L-3.5 -8.9L-2.1 -9L-0.7 -9.5L0.8 -10.2L2.3 -10.2L3.7 -9.5L4.8 -8.3L5.8 -7.2L7 -6.5L8.4 -5.7L9.5 -4.6L9.7 -3L9.4 -1.4L9.2 -0Z" fill="#c0ccd6"/><path d="M-10 1A10 10 0 0 0 8 6Q2 4 -2 7Q-6 6 -10 1Z" fill="#8396ad" opacity=".7"/><path d="M4.4 1.9L4.2 2.9L3.9 4.2L3.1 5.1L1.9 5.4L0.6 5.1L-0.4 4.8L-1.5 4.9L-2.8 5L-3.9 4.5L-4.5 3.4L-4.6 2.2L-4.7 1.1L-5.1 0.1L-5.6 -1.1L-5.5 -2.3L-4.7 -3.3L-3.5 -3.7L-2.5 -4.1L-1.7 -4.8L-0.7 -5.7L0.5 -6L1.7 -5.5L2.5 -4.5L3.1 -3.6L4.1 -3.1L5.2 -2.4L5.8 -1.4L5.7 -0.1L5 1L4.4 1.9Z" fill="#e3e7e4" opacity=".7" transform="translate(-1.5 -2)"/><path d="M-8 -4Q-4 -10 4 -9M5 -6Q10 -1 7 6M-3 -2Q0 -5 3 -2M-4 2Q0 5 4 1" stroke="#8396ad" stroke-width="1.4" fill="none"/><path d="M-6.5 -6.5Q0 -10 6.5 -5.5M-8 5Q-2 9 6 3M8 -3Q9 1 6 4" stroke="#e3e7e4" stroke-width="1.3" fill="none" opacity=".85"/></g><filter id="bl4" x="-5%" y="-5%" width="110%" height="110%"><feGaussianBlur stdDeviation="0.45"/></filter></defs><g filter="url(#bl4)"><rect x="-5" y="-5" width="132" height="132" fill="#272b3c"/><use href="#lf" transform="translate(82.3 7.6) rotate(121) scale(1)"/><use href="#lf" transform="translate(18.4 14.1) rotate(303) scale(0.8)"/><use href="#lf" transform="translate(32.5 20.6) rotate(278) scale(0.9)"/><use href="#lf" transform="translate(14.1 26) rotate(66) scale(0.7)"/><use href="#lf" transform="translate(67.2 17.3) rotate(189) scale(0.9)"/><use href="#lf" transform="translate(99.7 27.1) rotate(309) scale(0.8)"/><use href="#lf" transform="translate(119.2 30.3) rotate(242) scale(0.6)"/><use href="#lf" transform="translate(6.5 46.6) rotate(320) scale(1)"/><use href="#lf" transform="translate(57.4 44.4) rotate(297) scale(0.7)"/><use href="#lf" transform="translate(95.3 48.8) rotate(33) scale(0.8)"/><use href="#lf" transform="translate(110.5 56.3) rotate(310) scale(1)"/><use href="#lf" transform="translate(73.7 57.4) rotate(6) scale(0.8)"/><use href="#lf" transform="translate(91 60.7) rotate(240) scale(0.7)"/><use href="#lf" transform="translate(22.8 67.2) rotate(132) scale(0.8)"/><use href="#lf" transform="translate(48.8 71.5) rotate(282) scale(0.8)"/><use href="#lf" transform="translate(85.6 83.4) rotate(119) scale(1)"/><use href="#lf" transform="translate(19.5 91) rotate(98) scale(0.8)"/><use href="#lf" transform="translate(33.6 97.5) rotate(240) scale(1)"/><use href="#lf" transform="translate(69.3 94.3) rotate(276) scale(1)"/><use href="#lf" transform="translate(14.1 104) rotate(281) scale(0.7)"/><use href="#lf" transform="translate(102.9 104) rotate(243) scale(0.8)"/><use href="#lf" transform="translate(112.7 73.7) rotate(203) scale(0.4)"/><use href="#lf" transform="translate(118.1 120.3) rotate(327) scale(0.7)"/><use href="#lf" transform="translate(56.3 119.2) rotate(77) scale(0.5)"/><use href="#lf" transform="translate(3.3 117) rotate(118) scale(0.6)"/><use href="#lf" transform="translate(1.1 20.6) rotate(325) scale(0.6)"/><use href="#lf" transform="translate(34.7 36.8) rotate(77) scale(0.3)"/><use href="#lf" transform="translate(52 34.7) rotate(267) scale(0.3)"/><use href="#lf" transform="translate(118.1 3.3) rotate(199) scale(0.5)"/><use href="#lf" transform="translate(52 1.1) rotate(7) scale(0.5)"/><use href="#rb" transform="translate(82.3 7.6) rotate(343) scale(1)"/><use href="#ry" transform="translate(18.4 14.1) rotate(32) scale(0.8)"/><use href="#rb" transform="translate(32.5 20.6) rotate(81) scale(0.9)"/><use href="#ry" transform="translate(14.1 26) rotate(302) scale(0.7)"/><use href="#rb" transform="translate(67.2 17.3) rotate(21) scale(0.9)"/><use href="#ry" transform="translate(99.7 27.1) rotate(154) scale(0.8)"/><use href="#ry" transform="translate(119.2 30.3) rotate(15) scale(0.6)"/><use href="#rb" transform="translate(6.5 46.6) rotate(137) scale(1)"/><use href="#ry" transform="translate(57.4 44.4) rotate(242) scale(0.7)"/><use href="#ry" transform="translate(95.3 48.8) rotate(304) scale(0.8)"/><use href="#rb" transform="translate(110.5 56.3) rotate(198) scale(1)"/><use href="#ry" transform="translate(73.7 57.4) rotate(218) scale(0.8)"/><use href="#ry" transform="translate(91 60.7) rotate(202) scale(0.7)"/><use href="#ry" transform="translate(22.8 67.2) rotate(295) scale(0.8)"/><use href="#ry" transform="translate(48.8 71.5) rotate(227) scale(0.8)"/><use href="#rb" transform="translate(85.6 83.4) rotate(68) scale(1)"/><use href="#ry" transform="translate(19.5 91) rotate(187) scale(0.8)"/><use href="#rb" transform="translate(33.6 97.5) rotate(49) scale(1)"/><use href="#rb" transform="translate(69.3 94.3) rotate(18) scale(1)"/><use href="#ry" transform="translate(14.1 104) rotate(69) scale(0.7)"/><use href="#ry" transform="translate(102.9 104) rotate(253) scale(0.8)"/><use href="#ry" transform="translate(112.7 73.7) rotate(111) scale(0.4)"/><use href="#ry" transform="translate(118.1 120.3) rotate(132) scale(0.7)"/><use href="#ry" transform="translate(56.3 119.2) rotate(344) scale(0.5)"/><use href="#ry" transform="translate(3.3 117) rotate(223) scale(0.6)"/><use href="#ry" transform="translate(1.1 20.6) rotate(320) scale(0.6)"/><use href="#ry" transform="translate(34.7 36.8) rotate(154) scale(0.3)"/><use href="#ry" transform="translate(52 34.7) rotate(215) scale(0.3)"/><use href="#rb" transform="translate(118.1 3.3) rotate(259) scale(0.5)"/><use href="#ry" transform="translate(52 1.1) rotate(197) scale(0.5)"/></g></svg></div>
<div class="a lbl" style="left:395px;top:281.5px">Lillian August JENNI MINT</div>
<div class="a lbl" style="left:530px;top:281.5px">Lillian August JENNI SKYBLUE</div>
<div class="a lbl" style="left:665px;top:281.5px">Lillian August JENNI CLASSIC</div>

<div class="img" style="left:395px;top:317.8px"><svg width="122" height="122" viewBox="0 0 122 122"><defs></defs><rect width="122" height="122" fill="#e8e5d8"/><path d="M-20.9 -25.6V-10.8M-15.3 -25.6V-10.8M-9.5 -5H5.3M-9.5 0.6H5.3" stroke="#1d2350" stroke-width="2.1" fill="none"/><path d="M-25.5 -21H-10.7M-25.5 -15.4H-10.7M-4.9 -9.6V5.2M0.7 -9.6V5.2" stroke="#8499c4" stroke-width="2.1" fill="none"/><circle cx="-18.1" cy="-2.2" r="8.6" fill="none" stroke="#1d2350" stroke-width="2.1"/><circle cx="-2.1" cy="-18.2" r="8.6" fill="none" stroke="#8499c4" stroke-width="2.1"/><path d="M-20.9 6.4V21.2M-15.3 6.4V21.2M-9.5 27H5.3M-9.5 32.6H5.3" stroke="#1d2350" stroke-width="2.1" fill="none"/><path d="M-25.5 11H-10.7M-25.5 16.6H-10.7M-4.9 22.4V37.2M0.7 22.4V37.2" stroke="#8499c4" stroke-width="2.1" fill="none"/><circle cx="-18.1" cy="29.8" r="8.6" fill="none" stroke="#1d2350" stroke-width="2.1"/><circle cx="-2.1" cy="13.8" r="8.6" fill="none" stroke="#8499c4" stroke-width="2.1"/><path d="M-20.9 38.4V53.2M-15.3 38.4V53.2M-9.5 59H5.3M-9.5 64.6H5.3" stroke="#1d2350" stroke-width="2.1" fill="none"/><path d="M-25.5 43H-10.7M-25.5 48.6H-10.7M-4.9 54.4V69.2M0.7 54.4V69.2" stroke="#8499c4" stroke-width="2.1" fill="none"/><circle cx="-18.1" cy="61.8" r="8.6" fill="none" stroke="#1d2350" stroke-width="2.1"/><circle cx="-2.1" cy="45.8" r="8.6" fill="none" stroke="#8499c4" stroke-width="2.1"/><path d="M-20.9 70.4V85.2M-15.3 70.4V85.2M-9.5 91H5.3M-9.5 96.6H5.3" stroke="#1d2350" stroke-width="2.1" fill="none"/><path d="M-25.5 75H-10.7M-25.5 80.6H-10.7M-4.9 86.4V101.2M0.7 86.4V101.2" stroke="#8499c4" stroke-width="2.1" fill="none"/><circle cx="-18.1" cy="93.8" r="8.6" fill="none" stroke="#1d2350" stroke-width="2.1"/><circle cx="-2.1" cy="77.8" r="8.6" fill="none" stroke="#8499c4" stroke-width="2.1"/><path d="M-20.9 102.4V117.2M-15.3 102.4V117.2M-9.5 123H5.3M-9.5 128.6H5.3" stroke="#1d2350" stroke-width="2.1" fill="none"/><path d="M-25.5 107H-10.7M-25.5 112.6H-10.7M-4.9 118.4V133.2M0.7 118.4V133.2" stroke="#8499c4" stroke-width="2.1" fill="none"/><circle cx="-18.1" cy="125.8" r="8.6" fill="none" stroke="#1d2350" stroke-width="2.1"/><circle cx="-2.1" cy="109.8" r="8.6" fill="none" stroke="#8499c4" stroke-width="2.1"/><path d="M-20.9 134.4V149.2M-15.3 134.4V149.2M-9.5 155H5.3M-9.5 160.6H5.3" stroke="#1d2350" stroke-width="2.1" fill="none"/><path d="M-25.5 139H-10.7M-25.5 144.6H-10.7M-4.9 150.4V165.2M0.7 150.4V165.2" stroke="#8499c4" stroke-width="2.1" fill="none"/><circle cx="-18.1" cy="157.8" r="8.6" fill="none" stroke="#1d2350" stroke-width="2.1"/><circle cx="-2.1" cy="141.8" r="8.6" fill="none" stroke="#8499c4" stroke-width="2.1"/><path d="M-20.9 166.4V181.2M-15.3 166.4V181.2M-9.5 187H5.3M-9.5 192.6H5.3" stroke="#1d2350" stroke-width="2.1" fill="none"/><path d="M-25.5 171H-10.7M-25.5 176.6H-10.7M-4.9 182.4V197.2M0.7 182.4V197.2" stroke="#8499c4" stroke-width="2.1" fill="none"/><circle cx="-18.1" cy="189.8" r="8.6" fill="none" stroke="#1d2350" stroke-width="2.1"/><circle cx="-2.1" cy="173.8" r="8.6" fill="none" stroke="#8499c4" stroke-width="2.1"/><path d="M11.1 -25.6V-10.8M16.7 -25.6V-10.8M22.5 -5H37.3M22.5 0.6H37.3" stroke="#1d2350" stroke-width="2.1" fill="none"/><path d="M6.5 -21H21.3M6.5 -15.4H21.3M27.1 -9.6V5.2M32.7 -9.6V5.2" stroke="#8499c4" stroke-width="2.1" fill="none"/><circle cx="13.9" cy="-2.2" r="8.6" fill="none" stroke="#1d2350" stroke-width="2.1"/><circle cx="29.9" cy="-18.2" r="8.6" fill="none" stroke="#8499c4" stroke-width="2.1"/><path d="M11.1 6.4V21.2M16.7 6.4V21.2M22.5 27H37.3M22.5 32.6H37.3" stroke="#1d2350" stroke-width="2.1" fill="none"/><path d="M6.5 11H21.3M6.5 16.6H21.3M27.1 22.4V37.2M32.7 22.4V37.2" stroke="#8499c4" stroke-width="2.1" fill="none"/><circle cx="13.9" cy="29.8" r="8.6" fill="none" stroke="#1d2350" stroke-width="2.1"/><circle cx="29.9" cy="13.8" r="8.6" fill="none" stroke="#8499c4" stroke-width="2.1"/><path d="M11.1 38.4V53.2M16.7 38.4V53.2M22.5 59H37.3M22.5 64.6H37.3" stroke="#1d2350" stroke-width="2.1" fill="none"/><path d="M6.5 43H21.3M6.5 48.6H21.3M27.1 54.4V69.2M32.7 54.4V69.2" stroke="#8499c4" stroke-width="2.1" fill="none"/><circle cx="13.9" cy="61.8" r="8.6" fill="none" stroke="#1d2350" stroke-width="2.1"/><circle cx="29.9" cy="45.8" r="8.6" fill="none" stroke="#8499c4" stroke-width="2.1"/><path d="M11.1 70.4V85.2M16.7 70.4V85.2M22.5 91H37.3M22.5 96.6H37.3" stroke="#1d2350" stroke-width="2.1" fill="none"/><path d="M6.5 75H21.3M6.5 80.6H21.3M27.1 86.4V101.2M32.7 86.4V101.2" stroke="#8499c4" stroke-width="2.1" fill="none"/><circle cx="13.9" cy="93.8" r="8.6" fill="none" stroke="#1d2350" stroke-width="2.1"/><circle cx="29.9" cy="77.8" r="8.6" fill="none" stroke="#8499c4" stroke-width="2.1"/><path d="M11.1 102.4V117.2M16.7 102.4V117.2M22.5 123H37.3M22.5 128.6H37.3" stroke="#1d2350" stroke-width="2.1" fill="none"/><path d="M6.5 107H21.3M6.5 112.6H21.3M27.1 118.4V133.2M32.7 118.4V133.2" stroke="#8499c4" stroke-width="2.1" fill="none"/><circle cx="13.9" cy="125.8" r="8.6" fill="none" stroke="#1d2350" stroke-width="2.1"/><circle cx="29.9" cy="109.8" r="8.6" fill="none" stroke="#8499c4" stroke-width="2.1"/><path d="M11.1 134.4V149.2M16.7 134.4V149.2M22.5 155H37.3M22.5 160.6H37.3" stroke="#1d2350" stroke-width="2.1" fill="none"/><path d="M6.5 139H21.3M6.5 144.6H21.3M27.1 150.4V165.2M32.7 150.4V165.2" stroke="#8499c4" stroke-width="2.1" fill="none"/><circle cx="13.9" cy="157.8" r="8.6" fill="none" stroke="#1d2350" stroke-width="2.1"/><circle cx="29.9" cy="141.8" r="8.6" fill="none" stroke="#8499c4" stroke-width="2.1"/><path d="M11.1 166.4V181.2M16.7 166.4V181.2M22.5 187H37.3M22.5 192.6H37.3" stroke="#1d2350" stroke-width="2.1" fill="none"/><path d="M6.5 171H21.3M6.5 176.6H21.3M27.1 182.4V197.2M32.7 182.4V197.2" stroke="#8499c4" stroke-width="2.1" fill="none"/><circle cx="13.9" cy="189.8" r="8.6" fill="none" stroke="#1d2350" stroke-width="2.1"/><circle cx="29.9" cy="173.8" r="8.6" fill="none" stroke="#8499c4" stroke-width="2.1"/><path d="M43.1 -25.6V-10.8M48.7 -25.6V-10.8M54.5 -5H69.3M54.5 0.6H69.3" stroke="#1d2350" stroke-width="2.1" fill="none"/><path d="M38.5 -21H53.3M38.5 -15.4H53.3M59.1 -9.6V5.2M64.7 -9.6V5.2" stroke="#8499c4" stroke-width="2.1" fill="none"/><circle cx="45.9" cy="-2.2" r="8.6" fill="none" stroke="#1d2350" stroke-width="2.1"/><circle cx="61.9" cy="-18.2" r="8.6" fill="none" stroke="#8499c4" stroke-width="2.1"/><path d="M43.1 6.4V21.2M48.7 6.4V21.2M54.5 27H69.3M54.5 32.6H69.3" stroke="#1d2350" stroke-width="2.1" fill="none"/><path d="M38.5 11H53.3M38.5 16.6H53.3M59.1 22.4V37.2M64.7 22.4V37.2" stroke="#8499c4" stroke-width="2.1" fill="none"/><circle cx="45.9" cy="29.8" r="8.6" fill="none" stroke="#1d2350" stroke-width="2.1"/><circle cx="61.9" cy="13.8" r="8.6" fill="none" stroke="#8499c4" stroke-width="2.1"/><path d="M43.1 38.4V53.2M48.7 38.4V53.2M54.5 59H69.3M54.5 64.6H69.3" stroke="#1d2350" stroke-width="2.1" fill="none"/><path d="M38.5 43H53.3M38.5 48.6H53.3M59.1 54.4V69.2M64.7 54.4V69.2" stroke="#8499c4" stroke-width="2.1" fill="none"/><circle cx="45.9" cy="61.8" r="8.6" fill="none" stroke="#1d2350" stroke-width="2.1"/><circle cx="61.9" cy="45.8" r="8.6" fill="none" stroke="#8499c4" stroke-width="2.1"/><path d="M43.1 70.4V85.2M48.7 70.4V85.2M54.5 91H69.3M54.5 96.6H69.3" stroke="#1d2350" stroke-width="2.1" fill="none"/><path d="M38.5 75H53.3M38.5 80.6H53.3M59.1 86.4V101.2M64.7 86.4V101.2" stroke="#8499c4" stroke-width="2.1" fill="none"/><circle cx="45.9" cy="93.8" r="8.6" fill="none" stroke="#1d2350" stroke-width="2.1"/><circle cx="61.9" cy="77.8" r="8.6" fill="none" stroke="#8499c4" stroke-width="2.1"/><path d="M43.1 102.4V117.2M48.7 102.4V117.2M54.5 123H69.3M54.5 128.6H69.3" stroke="#1d2350" stroke-width="2.1" fill="none"/><path d="M38.5 107H53.3M38.5 112.6H53.3M59.1 118.4V133.2M64.7 118.4V133.2" stroke="#8499c4" stroke-width="2.1" fill="none"/><circle cx="45.9" cy="125.8" r="8.6" fill="none" stroke="#1d2350" stroke-width="2.1"/><circle cx="61.9" cy="109.8" r="8.6" fill="none" stroke="#8499c4" stroke-width="2.1"/><path d="M43.1 134.4V149.2M48.7 134.4V149.2M54.5 155H69.3M54.5 160.6H69.3" stroke="#1d2350" stroke-width="2.1" fill="none"/><path d="M38.5 139H53.3M38.5 144.6H53.3M59.1 150.4V165.2M64.7 150.4V165.2" stroke="#8499c4" stroke-width="2.1" fill="none"/><circle cx="45.9" cy="157.8" r="8.6" fill="none" stroke="#1d2350" stroke-width="2.1"/><circle cx="61.9" cy="141.8" r="8.6" fill="none" stroke="#8499c4" stroke-width="2.1"/><path d="M43.1 166.4V181.2M48.7 166.4V181.2M54.5 187H69.3M54.5 192.6H69.3" stroke="#1d2350" stroke-width="2.1" fill="none"/><path d="M38.5 171H53.3M38.5 176.6H53.3M59.1 182.4V197.2M64.7 182.4V197.2" stroke="#8499c4" stroke-width="2.1" fill="none"/><circle cx="45.9" cy="189.8" r="8.6" fill="none" stroke="#1d2350" stroke-width="2.1"/><circle cx="61.9" cy="173.8" r="8.6" fill="none" stroke="#8499c4" stroke-width="2.1"/><path d="M75.1 -25.6V-10.8M80.7 -25.6V-10.8M86.5 -5H101.3M86.5 0.6H101.3" stroke="#1d2350" stroke-width="2.1" fill="none"/><path d="M70.5 -21H85.3M70.5 -15.4H85.3M91.1 -9.6V5.2M96.7 -9.6V5.2" stroke="#8499c4" stroke-width="2.1" fill="none"/><circle cx="77.9" cy="-2.2" r="8.6" fill="none" stroke="#1d2350" stroke-width="2.1"/><circle cx="93.9" cy="-18.2" r="8.6" fill="none" stroke="#8499c4" stroke-width="2.1"/><path d="M75.1 6.4V21.2M80.7 6.4V21.2M86.5 27H101.3M86.5 32.6H101.3" stroke="#1d2350" stroke-width="2.1" fill="none"/><path d="M70.5 11H85.3M70.5 16.6H85.3M91.1 22.4V37.2M96.7 22.4V37.2" stroke="#8499c4" stroke-width="2.1" fill="none"/><circle cx="77.9" cy="29.8" r="8.6" fill="none" stroke="#1d2350" stroke-width="2.1"/><circle cx="93.9" cy="13.8" r="8.6" fill="none" stroke="#8499c4" stroke-width="2.1"/><path d="M75.1 38.4V53.2M80.7 38.4V53.2M86.5 59H101.3M86.5 64.6H101.3" stroke="#1d2350" stroke-width="2.1" fill="none"/><path d="M70.5 43H85.3M70.5 48.6H85.3M91.1 54.4V69.2M96.7 54.4V69.2" stroke="#8499c4" stroke-width="2.1" fill="none"/><circle cx="77.9" cy="61.8" r="8.6" fill="none" stroke="#1d2350" stroke-width="2.1"/><circle cx="93.9" cy="45.8" r="8.6" fill="none" stroke="#8499c4" stroke-width="2.1"/><path d="M75.1 70.4V85.2M80.7 70.4V85.2M86.5 91H101.3M86.5 96.6H101.3" stroke="#1d2350" stroke-width="2.1" fill="none"/><path d="M70.5 75H85.3M70.5 80.6H85.3M91.1 86.4V101.2M96.7 86.4V101.2" stroke="#8499c4" stroke-width="2.1" fill="none"/><circle cx="77.9" cy="93.8" r="8.6" fill="none" stroke="#1d2350" stroke-width="2.1"/><circle cx="93.9" cy="77.8" r="8.6" fill="none" stroke="#8499c4" stroke-width="2.1"/><path d="M75.1 102.4V117.2M80.7 102.4V117.2M86.5 123H101.3M86.5 128.6H101.3" stroke="#1d2350" stroke-width="2.1" fill="none"/><path d="M70.5 107H85.3M70.5 112.6H85.3M91.1 118.4V133.2M96.7 118.4V133.2" stroke="#8499c4" stroke-width="2.1" fill="none"/><circle cx="77.9" cy="125.8" r="8.6" fill="none" stroke="#1d2350" stroke-width="2.1"/><circle cx="93.9" cy="109.8" r="8.6" fill="none" stroke="#8499c4" stroke-width="2.1"/><path d="M75.1 134.4V149.2M80.7 134.4V149.2M86.5 155H101.3M86.5 160.6H101.3" stroke="#1d2350" stroke-width="2.1" fill="none"/><path d="M70.5 139H85.3M70.5 144.6H85.3M91.1 150.4V165.2M96.7 150.4V165.2" stroke="#8499c4" stroke-width="2.1" fill="none"/><circle cx="77.9" cy="157.8" r="8.6" fill="none" stroke="#1d2350" stroke-width="2.1"/><circle cx="93.9" cy="141.8" r="8.6" fill="none" stroke="#8499c4" stroke-width="2.1"/><path d="M75.1 166.4V181.2M80.7 166.4V181.2M86.5 187H101.3M86.5 192.6H101.3" stroke="#1d2350" stroke-width="2.1" fill="none"/><path d="M70.5 171H85.3M70.5 176.6H85.3M91.1 182.4V197.2M96.7 182.4V197.2" stroke="#8499c4" stroke-width="2.1" fill="none"/><circle cx="77.9" cy="189.8" r="8.6" fill="none" stroke="#1d2350" stroke-width="2.1"/><circle cx="93.9" cy="173.8" r="8.6" fill="none" stroke="#8499c4" stroke-width="2.1"/><path d="M107.1 -25.6V-10.8M112.7 -25.6V-10.8M118.5 -5H133.3M118.5 0.6H133.3" stroke="#1d2350" stroke-width="2.1" fill="none"/><path d="M102.5 -21H117.3M102.5 -15.4H117.3M123.1 -9.6V5.2M128.7 -9.6V5.2" stroke="#8499c4" stroke-width="2.1" fill="none"/><circle cx="109.9" cy="-2.2" r="8.6" fill="none" stroke="#1d2350" stroke-width="2.1"/><circle cx="125.9" cy="-18.2" r="8.6" fill="none" stroke="#8499c4" stroke-width="2.1"/><path d="M107.1 6.4V21.2M112.7 6.4V21.2M118.5 27H133.3M118.5 32.6H133.3" stroke="#1d2350" stroke-width="2.1" fill="none"/><path d="M102.5 11H117.3M102.5 16.6H117.3M123.1 22.4V37.2M128.7 22.4V37.2" stroke="#8499c4" stroke-width="2.1" fill="none"/><circle cx="109.9" cy="29.8" r="8.6" fill="none" stroke="#1d2350" stroke-width="2.1"/><circle cx="125.9" cy="13.8" r="8.6" fill="none" stroke="#8499c4" stroke-width="2.1"/><path d="M107.1 38.4V53.2M112.7 38.4V53.2M118.5 59H133.3M118.5 64.6H133.3" stroke="#1d2350" stroke-width="2.1" fill="none"/><path d="M102.5 43H117.3M102.5 48.6H117.3M123.1 54.4V69.2M128.7 54.4V69.2" stroke="#8499c4" stroke-width="2.1" fill="none"/><circle cx="109.9" cy="61.8" r="8.6" fill="none" stroke="#1d2350" stroke-width="2.1"/><circle cx="125.9" cy="45.8" r="8.6" fill="none" stroke="#8499c4" stroke-width="2.1"/><path d="M107.1 70.4V85.2M112.7 70.4V85.2M118.5 91H133.3M118.5 96.6H133.3" stroke="#1d2350" stroke-width="2.1" fill="none"/><path d="M102.5 75H117.3M102.5 80.6H117.3M123.1 86.4V101.2M128.7 86.4V101.2" stroke="#8499c4" stroke-width="2.1" fill="none"/><circle cx="109.9" cy="93.8" r="8.6" fill="none" stroke="#1d2350" stroke-width="2.1"/><circle cx="125.9" cy="77.8" r="8.6" fill="none" stroke="#8499c4" stroke-width="2.1"/><path d="M107.1 102.4V117.2M112.7 102.4V117.2M118.5 123H133.3M118.5 128.6H133.3" stroke="#1d2350" stroke-width="2.1" fill="none"/><path d="M102.5 107H117.3M102.5 112.6H117.3M123.1 118.4V133.2M128.7 118.4V133.2" stroke="#8499c4" stroke-width="2.1" fill="none"/><circle cx="109.9" cy="125.8" r="8.6" fill="none" stroke="#1d2350" stroke-width="2.1"/><circle cx="125.9" cy="109.8" r="8.6" fill="none" stroke="#8499c4" stroke-width="2.1"/><path d="M107.1 134.4V149.2M112.7 134.4V149.2M118.5 155H133.3M118.5 160.6H133.3" stroke="#1d2350" stroke-width="2.1" fill="none"/><path d="M102.5 139H117.3M102.5 144.6H117.3M123.1 150.4V165.2M128.7 150.4V165.2" stroke="#8499c4" stroke-width="2.1" fill="none"/><circle cx="109.9" cy="157.8" r="8.6" fill="none" stroke="#1d2350" stroke-width="2.1"/><circle cx="125.9" cy="141.8" r="8.6" fill="none" stroke="#8499c4" stroke-width="2.1"/><path d="M107.1 166.4V181.2M112.7 166.4V181.2M118.5 187H133.3M118.5 192.6H133.3" stroke="#1d2350" stroke-width="2.1" fill="none"/><path d="M102.5 171H117.3M102.5 176.6H117.3M123.1 182.4V197.2M128.7 182.4V197.2" stroke="#8499c4" stroke-width="2.1" fill="none"/><circle cx="109.9" cy="189.8" r="8.6" fill="none" stroke="#1d2350" stroke-width="2.1"/><circle cx="125.9" cy="173.8" r="8.6" fill="none" stroke="#8499c4" stroke-width="2.1"/><path d="M139.1 -25.6V-10.8M144.7 -25.6V-10.8M150.5 -5H165.3M150.5 0.6H165.3" stroke="#1d2350" stroke-width="2.1" fill="none"/><path d="M134.5 -21H149.3M134.5 -15.4H149.3M155.1 -9.6V5.2M160.7 -9.6V5.2" stroke="#8499c4" stroke-width="2.1" fill="none"/><circle cx="141.9" cy="-2.2" r="8.6" fill="none" stroke="#1d2350" stroke-width="2.1"/><circle cx="157.9" cy="-18.2" r="8.6" fill="none" stroke="#8499c4" stroke-width="2.1"/><path d="M139.1 6.4V21.2M144.7 6.4V21.2M150.5 27H165.3M150.5 32.6H165.3" stroke="#1d2350" stroke-width="2.1" fill="none"/><path d="M134.5 11H149.3M134.5 16.6H149.3M155.1 22.4V37.2M160.7 22.4V37.2" stroke="#8499c4" stroke-width="2.1" fill="none"/><circle cx="141.9" cy="29.8" r="8.6" fill="none" stroke="#1d2350" stroke-width="2.1"/><circle cx="157.9" cy="13.8" r="8.6" fill="none" stroke="#8499c4" stroke-width="2.1"/><path d="M139.1 38.4V53.2M144.7 38.4V53.2M150.5 59H165.3M150.5 64.6H165.3" stroke="#1d2350" stroke-width="2.1" fill="none"/><path d="M134.5 43H149.3M134.5 48.6H149.3M155.1 54.4V69.2M160.7 54.4V69.2" stroke="#8499c4" stroke-width="2.1" fill="none"/><circle cx="141.9" cy="61.8" r="8.6" fill="none" stroke="#1d2350" stroke-width="2.1"/><circle cx="157.9" cy="45.8" r="8.6" fill="none" stroke="#8499c4" stroke-width="2.1"/><path d="M139.1 70.4V85.2M144.7 70.4V85.2M150.5 91H165.3M150.5 96.6H165.3" stroke="#1d2350" stroke-width="2.1" fill="none"/><path d="M134.5 75H149.3M134.5 80.6H149.3M155.1 86.4V101.2M160.7 86.4V101.2" stroke="#8499c4" stroke-width="2.1" fill="none"/><circle cx="141.9" cy="93.8" r="8.6" fill="none" stroke="#1d2350" stroke-width="2.1"/><circle cx="157.9" cy="77.8" r="8.6" fill="none" stroke="#8499c4" stroke-width="2.1"/><path d="M139.1 102.4V117.2M144.7 102.4V117.2M150.5 123H165.3M150.5 128.6H165.3" stroke="#1d2350" stroke-width="2.1" fill="none"/><path d="M134.5 107H149.3M134.5 112.6H149.3M155.1 118.4V133.2M160.7 118.4V133.2" stroke="#8499c4" stroke-width="2.1" fill="none"/><circle cx="141.9" cy="125.8" r="8.6" fill="none" stroke="#1d2350" stroke-width="2.1"/><circle cx="157.9" cy="109.8" r="8.6" fill="none" stroke="#8499c4" stroke-width="2.1"/><path d="M139.1 134.4V149.2M144.7 134.4V149.2M150.5 155H165.3M150.5 160.6H165.3" stroke="#1d2350" stroke-width="2.1" fill="none"/><path d="M134.5 139H149.3M134.5 144.6H149.3M155.1 150.4V165.2M160.7 150.4V165.2" stroke="#8499c4" stroke-width="2.1" fill="none"/><circle cx="141.9" cy="157.8" r="8.6" fill="none" stroke="#1d2350" stroke-width="2.1"/><circle cx="157.9" cy="141.8" r="8.6" fill="none" stroke="#8499c4" stroke-width="2.1"/><path d="M139.1 166.4V181.2M144.7 166.4V181.2M150.5 187H165.3M150.5 192.6H165.3" stroke="#1d2350" stroke-width="2.1" fill="none"/><path d="M134.5 171H149.3M134.5 176.6H149.3M155.1 182.4V197.2M160.7 182.4V197.2" stroke="#8499c4" stroke-width="2.1" fill="none"/><circle cx="141.9" cy="189.8" r="8.6" fill="none" stroke="#1d2350" stroke-width="2.1"/><circle cx="157.9" cy="173.8" r="8.6" fill="none" stroke="#8499c4" stroke-width="2.1"/><path d="M171.1 -25.6V-10.8M176.7 -25.6V-10.8M182.5 -5H197.3M182.5 0.6H197.3" stroke="#1d2350" stroke-width="2.1" fill="none"/><path d="M166.5 -21H181.3M166.5 -15.4H181.3M187.1 -9.6V5.2M192.7 -9.6V5.2" stroke="#8499c4" stroke-width="2.1" fill="none"/><circle cx="173.9" cy="-2.2" r="8.6" fill="none" stroke="#1d2350" stroke-width="2.1"/><circle cx="189.9" cy="-18.2" r="8.6" fill="none" stroke="#8499c4" stroke-width="2.1"/><path d="M171.1 6.4V21.2M176.7 6.4V21.2M182.5 27H197.3M182.5 32.6H197.3" stroke="#1d2350" stroke-width="2.1" fill="none"/><path d="M166.5 11H181.3M166.5 16.6H181.3M187.1 22.4V37.2M192.7 22.4V37.2" stroke="#8499c4" stroke-width="2.1" fill="none"/><circle cx="173.9" cy="29.8" r="8.6" fill="none" stroke="#1d2350" stroke-width="2.1"/><circle cx="189.9" cy="13.8" r="8.6" fill="none" stroke="#8499c4" stroke-width="2.1"/><path d="M171.1 38.4V53.2M176.7 38.4V53.2M182.5 59H197.3M182.5 64.6H197.3" stroke="#1d2350" stroke-width="2.1" fill="none"/><path d="M166.5 43H181.3M166.5 48.6H181.3M187.1 54.4V69.2M192.7 54.4V69.2" stroke="#8499c4" stroke-width="2.1" fill="none"/><circle cx="173.9" cy="61.8" r="8.6" fill="none" stroke="#1d2350" stroke-width="2.1"/><circle cx="189.9" cy="45.8" r="8.6" fill="none" stroke="#8499c4" stroke-width="2.1"/><path d="M171.1 70.4V85.2M176.7 70.4V85.2M182.5 91H197.3M182.5 96.6H197.3" stroke="#1d2350" stroke-width="2.1" fill="none"/><path d="M166.5 75H181.3M166.5 80.6H181.3M187.1 86.4V101.2M192.7 86.4V101.2" stroke="#8499c4" stroke-width="2.1" fill="none"/><circle cx="173.9" cy="93.8" r="8.6" fill="none" stroke="#1d2350" stroke-width="2.1"/><circle cx="189.9" cy="77.8" r="8.6" fill="none" stroke="#8499c4" stroke-width="2.1"/><path d="M171.1 102.4V117.2M176.7 102.4V117.2M182.5 123H197.3M182.5 128.6H197.3" stroke="#1d2350" stroke-width="2.1" fill="none"/><path d="M166.5 107H181.3M166.5 112.6H181.3M187.1 118.4V133.2M192.7 118.4V133.2" stroke="#8499c4" stroke-width="2.1" fill="none"/><circle cx="173.9" cy="125.8" r="8.6" fill="none" stroke="#1d2350" stroke-width="2.1"/><circle cx="189.9" cy="109.8" r="8.6" fill="none" stroke="#8499c4" stroke-width="2.1"/><path d="M171.1 134.4V149.2M176.7 134.4V149.2M182.5 155H197.3M182.5 160.6H197.3" stroke="#1d2350" stroke-width="2.1" fill="none"/><path d="M166.5 139H181.3M166.5 144.6H181.3M187.1 150.4V165.2M192.7 150.4V165.2" stroke="#8499c4" stroke-width="2.1" fill="none"/><circle cx="173.9" cy="157.8" r="8.6" fill="none" stroke="#1d2350" stroke-width="2.1"/><circle cx="189.9" cy="141.8" r="8.6" fill="none" stroke="#8499c4" stroke-width="2.1"/><path d="M171.1 166.4V181.2M176.7 166.4V181.2M182.5 187H197.3M182.5 192.6H197.3" stroke="#1d2350" stroke-width="2.1" fill="none"/><path d="M166.5 171H181.3M166.5 176.6H181.3M187.1 182.4V197.2M192.7 182.4V197.2" stroke="#8499c4" stroke-width="2.1" fill="none"/><circle cx="173.9" cy="189.8" r="8.6" fill="none" stroke="#1d2350" stroke-width="2.1"/><circle cx="189.9" cy="173.8" r="8.6" fill="none" stroke="#8499c4" stroke-width="2.1"/><rect x="-19.9" y="-12.3" width="3.5" height="20.2" fill="#e8e5d8"/><rect x="-28.2" y="-3.9" width="20.2" height="3.5" fill="#e8e5d8"/><circle cx="-18.1" cy="-2.2" r="7.0" fill="#e8e5d8"/><rect x="-3.9" y="-28.3" width="3.5" height="20.2" fill="#e8e5d8"/><rect x="-12.2" y="-19.9" width="20.2" height="3.5" fill="#e8e5d8"/><circle cx="-2.1" cy="-18.2" r="7.0" fill="#e8e5d8"/><rect x="-19.9" y="19.7" width="3.5" height="20.2" fill="#e8e5d8"/><rect x="-28.2" y="28.1" width="20.2" height="3.5" fill="#e8e5d8"/><circle cx="-18.1" cy="29.8" r="7.0" fill="#e8e5d8"/><rect x="-3.9" y="3.7" width="3.5" height="20.2" fill="#e8e5d8"/><rect x="-12.2" y="12.1" width="20.2" height="3.5" fill="#e8e5d8"/><circle cx="-2.1" cy="13.8" r="7.0" fill="#e8e5d8"/><rect x="-19.9" y="51.7" width="3.5" height="20.2" fill="#e8e5d8"/><rect x="-28.2" y="60" width="20.2" height="3.5" fill="#e8e5d8"/><circle cx="-18.1" cy="61.8" r="7.0" fill="#e8e5d8"/><rect x="-3.9" y="35.7" width="3.5" height="20.2" fill="#e8e5d8"/><rect x="-12.2" y="44" width="20.2" height="3.5" fill="#e8e5d8"/><circle cx="-2.1" cy="45.8" r="7.0" fill="#e8e5d8"/><rect x="-19.9" y="83.7" width="3.5" height="20.2" fill="#e8e5d8"/><rect x="-28.2" y="92" width="20.2" height="3.5" fill="#e8e5d8"/><circle cx="-18.1" cy="93.8" r="7.0" fill="#e8e5d8"/><rect x="-3.9" y="67.7" width="3.5" height="20.2" fill="#e8e5d8"/><rect x="-12.2" y="76" width="20.2" height="3.5" fill="#e8e5d8"/><circle cx="-2.1" cy="77.8" r="7.0" fill="#e8e5d8"/><rect x="-19.9" y="115.7" width="3.5" height="20.2" fill="#e8e5d8"/><rect x="-28.2" y="124" width="20.2" height="3.5" fill="#e8e5d8"/><circle cx="-18.1" cy="125.8" r="7.0" fill="#e8e5d8"/><rect x="-3.9" y="99.7" width="3.5" height="20.2" fill="#e8e5d8"/><rect x="-12.2" y="108" width="20.2" height="3.5" fill="#e8e5d8"/><circle cx="-2.1" cy="109.8" r="7.0" fill="#e8e5d8"/><rect x="-19.9" y="147.7" width="3.5" height="20.2" fill="#e8e5d8"/><rect x="-28.2" y="156.1" width="20.2" height="3.5" fill="#e8e5d8"/><circle cx="-18.1" cy="157.8" r="7.0" fill="#e8e5d8"/><rect x="-3.9" y="131.7" width="3.5" height="20.2" fill="#e8e5d8"/><rect x="-12.2" y="140.1" width="20.2" height="3.5" fill="#e8e5d8"/><circle cx="-2.1" cy="141.8" r="7.0" fill="#e8e5d8"/><rect x="-19.9" y="179.7" width="3.5" height="20.2" fill="#e8e5d8"/><rect x="-28.2" y="188.1" width="20.2" height="3.5" fill="#e8e5d8"/><circle cx="-18.1" cy="189.8" r="7.0" fill="#e8e5d8"/><rect x="-3.9" y="163.7" width="3.5" height="20.2" fill="#e8e5d8"/><rect x="-12.2" y="172.1" width="20.2" height="3.5" fill="#e8e5d8"/><circle cx="-2.1" cy="173.8" r="7.0" fill="#e8e5d8"/><rect x="12.2" y="-12.3" width="3.5" height="20.2" fill="#e8e5d8"/><rect x="3.8" y="-3.9" width="20.2" height="3.5" fill="#e8e5d8"/><circle cx="13.9" cy="-2.2" r="7.0" fill="#e8e5d8"/><rect x="28.1" y="-28.3" width="3.5" height="20.2" fill="#e8e5d8"/><rect x="19.8" y="-19.9" width="20.2" height="3.5" fill="#e8e5d8"/><circle cx="29.9" cy="-18.2" r="7.0" fill="#e8e5d8"/><rect x="12.2" y="19.7" width="3.5" height="20.2" fill="#e8e5d8"/><rect x="3.8" y="28.1" width="20.2" height="3.5" fill="#e8e5d8"/><circle cx="13.9" cy="29.8" r="7.0" fill="#e8e5d8"/><rect x="28.1" y="3.7" width="3.5" height="20.2" fill="#e8e5d8"/><rect x="19.8" y="12.1" width="20.2" height="3.5" fill="#e8e5d8"/><circle cx="29.9" cy="13.8" r="7.0" fill="#e8e5d8"/><rect x="12.2" y="51.7" width="3.5" height="20.2" fill="#e8e5d8"/><rect x="3.8" y="60" width="20.2" height="3.5" fill="#e8e5d8"/><circle cx="13.9" cy="61.8" r="7.0" fill="#e8e5d8"/><rect x="28.1" y="35.7" width="3.5" height="20.2" fill="#e8e5d8"/><rect x="19.8" y="44" width="20.2" height="3.5" fill="#e8e5d8"/><circle cx="29.9" cy="45.8" r="7.0" fill="#e8e5d8"/><rect x="12.2" y="83.7" width="3.5" height="20.2" fill="#e8e5d8"/><rect x="3.8" y="92" width="20.2" height="3.5" fill="#e8e5d8"/><circle cx="13.9" cy="93.8" r="7.0" fill="#e8e5d8"/><rect x="28.1" y="67.7" width="3.5" height="20.2" fill="#e8e5d8"/><rect x="19.8" y="76" width="20.2" height="3.5" fill="#e8e5d8"/><circle cx="29.9" cy="77.8" r="7.0" fill="#e8e5d8"/><rect x="12.2" y="115.7" width="3.5" height="20.2" fill="#e8e5d8"/><rect x="3.8" y="124" width="20.2" height="3.5" fill="#e8e5d8"/><circle cx="13.9" cy="125.8" r="7.0" fill="#e8e5d8"/><rect x="28.1" y="99.7" width="3.5" height="20.2" fill="#e8e5d8"/><rect x="19.8" y="108" width="20.2" height="3.5" fill="#e8e5d8"/><circle cx="29.9" cy="109.8" r="7.0" fill="#e8e5d8"/><rect x="12.2" y="147.7" width="3.5" height="20.2" fill="#e8e5d8"/><rect x="3.8" y="156.1" width="20.2" height="3.5" fill="#e8e5d8"/><circle cx="13.9" cy="157.8" r="7.0" fill="#e8e5d8"/><rect x="28.1" y="131.7" width="3.5" height="20.2" fill="#e8e5d8"/><rect x="19.8" y="140.1" width="20.2" height="3.5" fill="#e8e5d8"/><circle cx="29.9" cy="141.8" r="7.0" fill="#e8e5d8"/><rect x="12.2" y="179.7" width="3.5" height="20.2" fill="#e8e5d8"/><rect x="3.8" y="188.1" width="20.2" height="3.5" fill="#e8e5d8"/><circle cx="13.9" cy="189.8" r="7.0" fill="#e8e5d8"/><rect x="28.1" y="163.7" width="3.5" height="20.2" fill="#e8e5d8"/><rect x="19.8" y="172.1" width="20.2" height="3.5" fill="#e8e5d8"/><circle cx="29.9" cy="173.8" r="7.0" fill="#e8e5d8"/><rect x="44.1" y="-12.3" width="3.5" height="20.2" fill="#e8e5d8"/><rect x="35.8" y="-3.9" width="20.2" height="3.5" fill="#e8e5d8"/><circle cx="45.9" cy="-2.2" r="7.0" fill="#e8e5d8"/><rect x="60.1" y="-28.3" width="3.5" height="20.2" fill="#e8e5d8"/><rect x="51.8" y="-19.9" width="20.2" height="3.5" fill="#e8e5d8"/><circle cx="61.9" cy="-18.2" r="7.0" fill="#e8e5d8"/><rect x="44.1" y="19.7" width="3.5" height="20.2" fill="#e8e5d8"/><rect x="35.8" y="28.1" width="20.2" height="3.5" fill="#e8e5d8"/><circle cx="45.9" cy="29.8" r="7.0" fill="#e8e5d8"/><rect x="60.1" y="3.7" width="3.5" height="20.2" fill="#e8e5d8"/><rect x="51.8" y="12.1" width="20.2" height="3.5" fill="#e8e5d8"/><circle cx="61.9" cy="13.8" r="7.0" fill="#e8e5d8"/><rect x="44.1" y="51.7" width="3.5" height="20.2" fill="#e8e5d8"/><rect x="35.8" y="60" width="20.2" height="3.5" fill="#e8e5d8"/><circle cx="45.9" cy="61.8" r="7.0" fill="#e8e5d8"/><rect x="60.1" y="35.7" width="3.5" height="20.2" fill="#e8e5d8"/><rect x="51.8" y="44" width="20.2" height="3.5" fill="#e8e5d8"/><circle cx="61.9" cy="45.8" r="7.0" fill="#e8e5d8"/><rect x="44.1" y="83.7" width="3.5" height="20.2" fill="#e8e5d8"/><rect x="35.8" y="92" width="20.2" height="3.5" fill="#e8e5d8"/><circle cx="45.9" cy="93.8" r="7.0" fill="#e8e5d8"/><rect x="60.1" y="67.7" width="3.5" height="20.2" fill="#e8e5d8"/><rect x="51.8" y="76" width="20.2" height="3.5" fill="#e8e5d8"/><circle cx="61.9" cy="77.8" r="7.0" fill="#e8e5d8"/><rect x="44.1" y="115.7" width="3.5" height="20.2" fill="#e8e5d8"/><rect x="35.8" y="124" width="20.2" height="3.5" fill="#e8e5d8"/><circle cx="45.9" cy="125.8" r="7.0" fill="#e8e5d8"/><rect x="60.1" y="99.7" width="3.5" height="20.2" fill="#e8e5d8"/><rect x="51.8" y="108" width="20.2" height="3.5" fill="#e8e5d8"/><circle cx="61.9" cy="109.8" r="7.0" fill="#e8e5d8"/><rect x="44.1" y="147.7" width="3.5" height="20.2" fill="#e8e5d8"/><rect x="35.8" y="156.1" width="20.2" height="3.5" fill="#e8e5d8"/><circle cx="45.9" cy="157.8" r="7.0" fill="#e8e5d8"/><rect x="60.1" y="131.7" width="3.5" height="20.2" fill="#e8e5d8"/><rect x="51.8" y="140.1" width="20.2" height="3.5" fill="#e8e5d8"/><circle cx="61.9" cy="141.8" r="7.0" fill="#e8e5d8"/><rect x="44.1" y="179.7" width="3.5" height="20.2" fill="#e8e5d8"/><rect x="35.8" y="188.1" width="20.2" height="3.5" fill="#e8e5d8"/><circle cx="45.9" cy="189.8" r="7.0" fill="#e8e5d8"/><rect x="60.1" y="163.7" width="3.5" height="20.2" fill="#e8e5d8"/><rect x="51.8" y="172.1" width="20.2" height="3.5" fill="#e8e5d8"/><circle cx="61.9" cy="173.8" r="7.0" fill="#e8e5d8"/><rect x="76.2" y="-12.3" width="3.5" height="20.2" fill="#e8e5d8"/><rect x="67.8" y="-3.9" width="20.2" height="3.5" fill="#e8e5d8"/><circle cx="77.9" cy="-2.2" r="7.0" fill="#e8e5d8"/><rect x="92.2" y="-28.3" width="3.5" height="20.2" fill="#e8e5d8"/><rect x="83.8" y="-19.9" width="20.2" height="3.5" fill="#e8e5d8"/><circle cx="93.9" cy="-18.2" r="7.0" fill="#e8e5d8"/><rect x="76.2" y="19.7" width="3.5" height="20.2" fill="#e8e5d8"/><rect x="67.8" y="28.1" width="20.2" height="3.5" fill="#e8e5d8"/><circle cx="77.9" cy="29.8" r="7.0" fill="#e8e5d8"/><rect x="92.2" y="3.7" width="3.5" height="20.2" fill="#e8e5d8"/><rect x="83.8" y="12.1" width="20.2" height="3.5" fill="#e8e5d8"/><circle cx="93.9" cy="13.8" r="7.0" fill="#e8e5d8"/><rect x="76.2" y="51.7" width="3.5" height="20.2" fill="#e8e5d8"/><rect x="67.8" y="60" width="20.2" height="3.5" fill="#e8e5d8"/><circle cx="77.9" cy="61.8" r="7.0" fill="#e8e5d8"/><rect x="92.2" y="35.7" width="3.5" height="20.2" fill="#e8e5d8"/><rect x="83.8" y="44" width="20.2" height="3.5" fill="#e8e5d8"/><circle cx="93.9" cy="45.8" r="7.0" fill="#e8e5d8"/><rect x="76.2" y="83.7" width="3.5" height="20.2" fill="#e8e5d8"/><rect x="67.8" y="92" width="20.2" height="3.5" fill="#e8e5d8"/><circle cx="77.9" cy="93.8" r="7.0" fill="#e8e5d8"/><rect x="92.2" y="67.7" width="3.5" height="20.2" fill="#e8e5d8"/><rect x="83.8" y="76" width="20.2" height="3.5" fill="#e8e5d8"/><circle cx="93.9" cy="77.8" r="7.0" fill="#e8e5d8"/><rect x="76.2" y="115.7" width="3.5" height="20.2" fill="#e8e5d8"/><rect x="67.8" y="124" width="20.2" height="3.5" fill="#e8e5d8"/><circle cx="77.9" cy="125.8" r="7.0" fill="#e8e5d8"/><rect x="92.2" y="99.7" width="3.5" height="20.2" fill="#e8e5d8"/><rect x="83.8" y="108" width="20.2" height="3.5" fill="#e8e5d8"/><circle cx="93.9" cy="109.8" r="7.0" fill="#e8e5d8"/><rect x="76.2" y="147.7" width="3.5" height="20.2" fill="#e8e5d8"/><rect x="67.8" y="156.1" width="20.2" height="3.5" fill="#e8e5d8"/><circle cx="77.9" cy="157.8" r="7.0" fill="#e8e5d8"/><rect x="92.2" y="131.7" width="3.5" height="20.2" fill="#e8e5d8"/><rect x="83.8" y="140.1" width="20.2" height="3.5" fill="#e8e5d8"/><circle cx="93.9" cy="141.8" r="7.0" fill="#e8e5d8"/><rect x="76.2" y="179.7" width="3.5" height="20.2" fill="#e8e5d8"/><rect x="67.8" y="188.1" width="20.2" height="3.5" fill="#e8e5d8"/><circle cx="77.9" cy="189.8" r="7.0" fill="#e8e5d8"/><rect x="92.2" y="163.7" width="3.5" height="20.2" fill="#e8e5d8"/><rect x="83.8" y="172.1" width="20.2" height="3.5" fill="#e8e5d8"/><circle cx="93.9" cy="173.8" r="7.0" fill="#e8e5d8"/><rect x="108.2" y="-12.3" width="3.5" height="20.2" fill="#e8e5d8"/><rect x="99.8" y="-3.9" width="20.2" height="3.5" fill="#e8e5d8"/><circle cx="109.9" cy="-2.2" r="7.0" fill="#e8e5d8"/><rect x="124.2" y="-28.3" width="3.5" height="20.2" fill="#e8e5d8"/><rect x="115.8" y="-19.9" width="20.2" height="3.5" fill="#e8e5d8"/><circle cx="125.9" cy="-18.2" r="7.0" fill="#e8e5d8"/><rect x="108.2" y="19.7" width="3.5" height="20.2" fill="#e8e5d8"/><rect x="99.8" y="28.1" width="20.2" height="3.5" fill="#e8e5d8"/><circle cx="109.9" cy="29.8" r="7.0" fill="#e8e5d8"/><rect x="124.2" y="3.7" width="3.5" height="20.2" fill="#e8e5d8"/><rect x="115.8" y="12.1" width="20.2" height="3.5" fill="#e8e5d8"/><circle cx="125.9" cy="13.8" r="7.0" fill="#e8e5d8"/><rect x="108.2" y="51.7" width="3.5" height="20.2" fill="#e8e5d8"/><rect x="99.8" y="60" width="20.2" height="3.5" fill="#e8e5d8"/><circle cx="109.9" cy="61.8" r="7.0" fill="#e8e5d8"/><rect x="124.2" y="35.7" width="3.5" height="20.2" fill="#e8e5d8"/><rect x="115.8" y="44" width="20.2" height="3.5" fill="#e8e5d8"/><circle cx="125.9" cy="45.8" r="7.0" fill="#e8e5d8"/><rect x="108.2" y="83.7" width="3.5" height="20.2" fill="#e8e5d8"/><rect x="99.8" y="92" width="20.2" height="3.5" fill="#e8e5d8"/><circle cx="109.9" cy="93.8" r="7.0" fill="#e8e5d8"/><rect x="124.2" y="67.7" width="3.5" height="20.2" fill="#e8e5d8"/><rect x="115.8" y="76" width="20.2" height="3.5" fill="#e8e5d8"/><circle cx="125.9" cy="77.8" r="7.0" fill="#e8e5d8"/><rect x="108.2" y="115.7" width="3.5" height="20.2" fill="#e8e5d8"/><rect x="99.8" y="124" width="20.2" height="3.5" fill="#e8e5d8"/><circle cx="109.9" cy="125.8" r="7.0" fill="#e8e5d8"/><rect x="124.2" y="99.7" width="3.5" height="20.2" fill="#e8e5d8"/><rect x="115.8" y="108" width="20.2" height="3.5" fill="#e8e5d8"/><circle cx="125.9" cy="109.8" r="7.0" fill="#e8e5d8"/><rect x="108.2" y="147.7" width="3.5" height="20.2" fill="#e8e5d8"/><rect x="99.8" y="156.1" width="20.2" height="3.5" fill="#e8e5d8"/><circle cx="109.9" cy="157.8" r="7.0" fill="#e8e5d8"/><rect x="124.2" y="131.7" width="3.5" height="20.2" fill="#e8e5d8"/><rect x="115.8" y="140.1" width="20.2" height="3.5" fill="#e8e5d8"/><circle cx="125.9" cy="141.8" r="7.0" fill="#e8e5d8"/><rect x="108.2" y="179.7" width="3.5" height="20.2" fill="#e8e5d8"/><rect x="99.8" y="188.1" width="20.2" height="3.5" fill="#e8e5d8"/><circle cx="109.9" cy="189.8" r="7.0" fill="#e8e5d8"/><rect x="124.2" y="163.7" width="3.5" height="20.2" fill="#e8e5d8"/><rect x="115.8" y="172.1" width="20.2" height="3.5" fill="#e8e5d8"/><circle cx="125.9" cy="173.8" r="7.0" fill="#e8e5d8"/><rect x="140.2" y="-12.3" width="3.5" height="20.2" fill="#e8e5d8"/><rect x="131.8" y="-3.9" width="20.2" height="3.5" fill="#e8e5d8"/><circle cx="141.9" cy="-2.2" r="7.0" fill="#e8e5d8"/><rect x="156.2" y="-28.3" width="3.5" height="20.2" fill="#e8e5d8"/><rect x="147.8" y="-19.9" width="20.2" height="3.5" fill="#e8e5d8"/><circle cx="157.9" cy="-18.2" r="7.0" fill="#e8e5d8"/><rect x="140.2" y="19.7" width="3.5" height="20.2" fill="#e8e5d8"/><rect x="131.8" y="28.1" width="20.2" height="3.5" fill="#e8e5d8"/><circle cx="141.9" cy="29.8" r="7.0" fill="#e8e5d8"/><rect x="156.2" y="3.7" width="3.5" height="20.2" fill="#e8e5d8"/><rect x="147.8" y="12.1" width="20.2" height="3.5" fill="#e8e5d8"/><circle cx="157.9" cy="13.8" r="7.0" fill="#e8e5d8"/><rect x="140.2" y="51.7" width="3.5" height="20.2" fill="#e8e5d8"/><rect x="131.8" y="60" width="20.2" height="3.5" fill="#e8e5d8"/><circle cx="141.9" cy="61.8" r="7.0" fill="#e8e5d8"/><rect x="156.2" y="35.7" width="3.5" height="20.2" fill="#e8e5d8"/><rect x="147.8" y="44" width="20.2" height="3.5" fill="#e8e5d8"/><circle cx="157.9" cy="45.8" r="7.0" fill="#e8e5d8"/><rect x="140.2" y="83.7" width="3.5" height="20.2" fill="#e8e5d8"/><rect x="131.8" y="92" width="20.2" height="3.5" fill="#e8e5d8"/><circle cx="141.9" cy="93.8" r="7.0" fill="#e8e5d8"/><rect x="156.2" y="67.7" width="3.5" height="20.2" fill="#e8e5d8"/><rect x="147.8" y="76" width="20.2" height="3.5" fill="#e8e5d8"/><circle cx="157.9" cy="77.8" r="7.0" fill="#e8e5d8"/><rect x="140.2" y="115.7" width="3.5" height="20.2" fill="#e8e5d8"/><rect x="131.8" y="124" width="20.2" height="3.5" fill="#e8e5d8"/><circle cx="141.9" cy="125.8" r="7.0" fill="#e8e5d8"/><rect x="156.2" y="99.7" width="3.5" height="20.2" fill="#e8e5d8"/><rect x="147.8" y="108" width="20.2" height="3.5" fill="#e8e5d8"/><circle cx="157.9" cy="109.8" r="7.0" fill="#e8e5d8"/><rect x="140.2" y="147.7" width="3.5" height="20.2" fill="#e8e5d8"/><rect x="131.8" y="156.1" width="20.2" height="3.5" fill="#e8e5d8"/><circle cx="141.9" cy="157.8" r="7.0" fill="#e8e5d8"/><rect x="156.2" y="131.7" width="3.5" height="20.2" fill="#e8e5d8"/><rect x="147.8" y="140.1" width="20.2" height="3.5" fill="#e8e5d8"/><circle cx="157.9" cy="141.8" r="7.0" fill="#e8e5d8"/><rect x="140.2" y="179.7" width="3.5" height="20.2" fill="#e8e5d8"/><rect x="131.8" y="188.1" width="20.2" height="3.5" fill="#e8e5d8"/><circle cx="141.9" cy="189.8" r="7.0" fill="#e8e5d8"/><rect x="156.2" y="163.7" width="3.5" height="20.2" fill="#e8e5d8"/><rect x="147.8" y="172.1" width="20.2" height="3.5" fill="#e8e5d8"/><circle cx="157.9" cy="173.8" r="7.0" fill="#e8e5d8"/><rect x="172.2" y="-12.3" width="3.5" height="20.2" fill="#e8e5d8"/><rect x="163.8" y="-3.9" width="20.2" height="3.5" fill="#e8e5d8"/><circle cx="173.9" cy="-2.2" r="7.0" fill="#e8e5d8"/><rect x="188.2" y="-28.3" width="3.5" height="20.2" fill="#e8e5d8"/><rect x="179.8" y="-19.9" width="20.2" height="3.5" fill="#e8e5d8"/><circle cx="189.9" cy="-18.2" r="7.0" fill="#e8e5d8"/><rect x="172.2" y="19.7" width="3.5" height="20.2" fill="#e8e5d8"/><rect x="163.8" y="28.1" width="20.2" height="3.5" fill="#e8e5d8"/><circle cx="173.9" cy="29.8" r="7.0" fill="#e8e5d8"/><rect x="188.2" y="3.7" width="3.5" height="20.2" fill="#e8e5d8"/><rect x="179.8" y="12.1" width="20.2" height="3.5" fill="#e8e5d8"/><circle cx="189.9" cy="13.8" r="7.0" fill="#e8e5d8"/><rect x="172.2" y="51.7" width="3.5" height="20.2" fill="#e8e5d8"/><rect x="163.8" y="60" width="20.2" height="3.5" fill="#e8e5d8"/><circle cx="173.9" cy="61.8" r="7.0" fill="#e8e5d8"/><rect x="188.2" y="35.7" width="3.5" height="20.2" fill="#e8e5d8"/><rect x="179.8" y="44" width="20.2" height="3.5" fill="#e8e5d8"/><circle cx="189.9" cy="45.8" r="7.0" fill="#e8e5d8"/><rect x="172.2" y="83.7" width="3.5" height="20.2" fill="#e8e5d8"/><rect x="163.8" y="92" width="20.2" height="3.5" fill="#e8e5d8"/><circle cx="173.9" cy="93.8" r="7.0" fill="#e8e5d8"/><rect x="188.2" y="67.7" width="3.5" height="20.2" fill="#e8e5d8"/><rect x="179.8" y="76" width="20.2" height="3.5" fill="#e8e5d8"/><circle cx="189.9" cy="77.8" r="7.0" fill="#e8e5d8"/><rect x="172.2" y="115.7" width="3.5" height="20.2" fill="#e8e5d8"/><rect x="163.8" y="124" width="20.2" height="3.5" fill="#e8e5d8"/><circle cx="173.9" cy="125.8" r="7.0" fill="#e8e5d8"/><rect x="188.2" y="99.7" width="3.5" height="20.2" fill="#e8e5d8"/><rect x="179.8" y="108" width="20.2" height="3.5" fill="#e8e5d8"/><circle cx="189.9" cy="109.8" r="7.0" fill="#e8e5d8"/><rect x="172.2" y="147.7" width="3.5" height="20.2" fill="#e8e5d8"/><rect x="163.8" y="156.1" width="20.2" height="3.5" fill="#e8e5d8"/><circle cx="173.9" cy="157.8" r="7.0" fill="#e8e5d8"/><rect x="188.2" y="131.7" width="3.5" height="20.2" fill="#e8e5d8"/><rect x="179.8" y="140.1" width="20.2" height="3.5" fill="#e8e5d8"/><circle cx="189.9" cy="141.8" r="7.0" fill="#e8e5d8"/><rect x="172.2" y="179.7" width="3.5" height="20.2" fill="#e8e5d8"/><rect x="163.8" y="188.1" width="20.2" height="3.5" fill="#e8e5d8"/><circle cx="173.9" cy="189.8" r="7.0" fill="#e8e5d8"/><rect x="188.2" y="163.7" width="3.5" height="20.2" fill="#e8e5d8"/><rect x="179.8" y="172.1" width="20.2" height="3.5" fill="#e8e5d8"/><circle cx="189.9" cy="173.8" r="7.0" fill="#e8e5d8"/></svg></div>
<div class="img" style="left:530px;top:317.8px"><svg width="122" height="122" viewBox="0 0 122 122"><defs><g id="ds" fill="#b2b6b6"><ellipse cx="0" cy="-1.5" rx="1.3" ry="2.8"/><ellipse cx="-2.5" cy="0.3" rx="1.1" ry="2.2" transform="rotate(-45 -2.5 0.3)"/><ellipse cx="2.5" cy="0.3" rx="1.1" ry="2.2" transform="rotate(45 2.5 0.3)"/><path d="M-5.1 1.4L0 6L5.1 1.4" fill="none" stroke="#b2b6b6" stroke-width="1.1"/></g></defs><rect width="122" height="122" fill="#e6e7e6"/><path d="M-369.7 0L-245.7 122M-359.9 0L-483.9 122M-350.9 0L-226.9 122M-341.1 0L-465.1 122M-332.1 0L-208.1 122M-322.3 0L-446.3 122M-313.3 0L-189.3 122M-303.5 0L-427.5 122M-294.5 0L-170.5 122M-284.7 0L-408.7 122M-275.7 0L-151.7 122M-265.9 0L-389.9 122M-256.9 0L-132.9 122M-247.1 0L-371.1 122M-238.1 0L-114.1 122M-228.3 0L-352.3 122M-219.3 0L-95.3 122M-209.5 0L-333.5 122M-200.5 0L-76.5 122M-190.7 0L-314.7 122M-181.7 0L-57.7 122M-171.9 0L-295.9 122M-162.9 0L-38.9 122M-153.1 0L-277.1 122M-144.1 0L-20.1 122M-134.3 0L-258.3 122M-125.3 0L-1.3 122M-115.5 0L-239.5 122M-106.5 0L17.5 122M-96.7 0L-220.7 122M-87.7 0L36.3 122M-77.9 0L-201.9 122M-68.9 0L55.1 122M-59.1 0L-183.1 122M-50.1 0L73.9 122M-40.3 0L-164.3 122M-31.3 0L92.7 122M-21.5 0L-145.5 122M-12.5 0L111.5 122M-2.7 0L-126.7 122M6.3 0L130.3 122M16.1 0L-107.9 122M25.1 0L149.1 122M34.9 0L-89.1 122M43.9 0L167.9 122M53.7 0L-70.3 122M62.7 0L186.7 122M72.5 0L-51.5 122M81.5 0L205.5 122M91.3 0L-32.7 122M100.3 0L224.3 122M110.1 0L-13.9 122M119.1 0L243.1 122M128.9 0L4.9 122M137.9 0L261.9 122M147.7 0L23.7 122M156.7 0L280.7 122M166.5 0L42.5 122M175.5 0L299.5 122M185.3 0L61.3 122M194.3 0L318.3 122M204.1 0L80.1 122M213.1 0L337.1 122M222.9 0L98.9 122M231.9 0L355.9 122M241.7 0L117.7 122M250.7 0L374.7 122M260.5 0L136.5 122M269.5 0L393.5 122M279.3 0L155.3 122M288.3 0L412.3 122M298.1 0L174.1 122M307.1 0L431.1 122M316.9 0L192.9 122M325.9 0L449.9 122M335.7 0L211.7 122M344.7 0L468.7 122M354.5 0L230.5 122M363.5 0L487.5 122M373.3 0L249.3 122M382.3 0L506.3 122M392.1 0L268.1 122M401.1 0L525.1 122M410.9 0L286.9 122M419.9 0L543.9 122M429.7 0L305.7 122M438.7 0L562.7 122M448.5 0L324.5 122M457.5 0L581.5 122M467.3 0L343.3 122" stroke="#c7caca" stroke-width="2.2" fill="none"/><path d="M-369.7 0L-245.7 122M-359.9 0L-483.9 122M-350.9 0L-226.9 122M-341.1 0L-465.1 122M-332.1 0L-208.1 122M-322.3 0L-446.3 122M-313.3 0L-189.3 122M-303.5 0L-427.5 122M-294.5 0L-170.5 122M-284.7 0L-408.7 122M-275.7 0L-151.7 122M-265.9 0L-389.9 122M-256.9 0L-132.9 122M-247.1 0L-371.1 122M-238.1 0L-114.1 122M-228.3 0L-352.3 122M-219.3 0L-95.3 122M-209.5 0L-333.5 122M-200.5 0L-76.5 122M-190.7 0L-314.7 122M-181.7 0L-57.7 122M-171.9 0L-295.9 122M-162.9 0L-38.9 122M-153.1 0L-277.1 122M-144.1 0L-20.1 122M-134.3 0L-258.3 122M-125.3 0L-1.3 122M-115.5 0L-239.5 122M-106.5 0L17.5 122M-96.7 0L-220.7 122M-87.7 0L36.3 122M-77.9 0L-201.9 122M-68.9 0L55.1 122M-59.1 0L-183.1 122M-50.1 0L73.9 122M-40.3 0L-164.3 122M-31.3 0L92.7 122M-21.5 0L-145.5 122M-12.5 0L111.5 122M-2.7 0L-126.7 122M6.3 0L130.3 122M16.1 0L-107.9 122M25.1 0L149.1 122M34.9 0L-89.1 122M43.9 0L167.9 122M53.7 0L-70.3 122M62.7 0L186.7 122M72.5 0L-51.5 122M81.5 0L205.5 122M91.3 0L-32.7 122M100.3 0L224.3 122M110.1 0L-13.9 122M119.1 0L243.1 122M128.9 0L4.9 122M137.9 0L261.9 122M147.7 0L23.7 122M156.7 0L280.7 122M166.5 0L42.5 122M175.5 0L299.5 122M185.3 0L61.3 122M194.3 0L318.3 122M204.1 0L80.1 122M213.1 0L337.1 122M222.9 0L98.9 122M231.9 0L355.9 122M241.7 0L117.7 122M250.7 0L374.7 122M260.5 0L136.5 122M269.5 0L393.5 122M279.3 0L155.3 122M288.3 0L412.3 122M298.1 0L174.1 122M307.1 0L431.1 122M316.9 0L192.9 122M325.9 0L449.9 122M335.7 0L211.7 122M344.7 0L468.7 122M354.5 0L230.5 122M363.5 0L487.5 122M373.3 0L249.3 122M382.3 0L506.3 122M392.1 0L268.1 122M401.1 0L525.1 122M410.9 0L286.9 122M419.9 0L543.9 122M429.7 0L305.7 122M438.7 0L562.7 122M448.5 0L324.5 122M457.5 0L581.5 122M467.3 0L343.3 122" stroke="#e0e2e1" stroke-width="0.8" fill="none"/><use href="#ds" x="-7.6" y="-4.5"/><use href="#ds" x="11.2" y="-4.5"/><use href="#ds" x="30" y="-4.5"/><use href="#ds" x="48.8" y="-4.5"/><use href="#ds" x="67.6" y="-4.5"/><use href="#ds" x="86.4" y="-4.5"/><use href="#ds" x="105.2" y="-4.5"/><use href="#ds" x="124" y="-4.5"/><use href="#ds" x="1.8" y="4.8"/><use href="#ds" x="20.6" y="4.8"/><use href="#ds" x="39.4" y="4.8"/><use href="#ds" x="58.2" y="4.8"/><use href="#ds" x="77" y="4.8"/><use href="#ds" x="95.8" y="4.8"/><use href="#ds" x="114.6" y="4.8"/><use href="#ds" x="-7.6" y="14.1"/><use href="#ds" x="11.2" y="14.1"/><use href="#ds" x="30" y="14.1"/><use href="#ds" x="48.8" y="14.1"/><use href="#ds" x="67.6" y="14.1"/><use href="#ds" x="86.4" y="14.1"/><use href="#ds" x="105.2" y="14.1"/><use href="#ds" x="124" y="14.1"/><use href="#ds" x="1.8" y="23.3"/><use href="#ds" x="20.6" y="23.3"/><use href="#ds" x="39.4" y="23.3"/><use href="#ds" x="58.2" y="23.3"/><use href="#ds" x="77" y="23.3"/><use href="#ds" x="95.8" y="23.3"/><use href="#ds" x="114.6" y="23.3"/><use href="#ds" x="-7.6" y="32.5"/><use href="#ds" x="11.2" y="32.5"/><use href="#ds" x="30" y="32.5"/><use href="#ds" x="48.8" y="32.5"/><use href="#ds" x="67.6" y="32.5"/><use href="#ds" x="86.4" y="32.5"/><use href="#ds" x="105.2" y="32.5"/><use href="#ds" x="124" y="32.5"/><use href="#ds" x="1.8" y="41.8"/><use href="#ds" x="20.6" y="41.8"/><use href="#ds" x="39.4" y="41.8"/><use href="#ds" x="58.2" y="41.8"/><use href="#ds" x="77" y="41.8"/><use href="#ds" x="95.8" y="41.8"/><use href="#ds" x="114.6" y="41.8"/><use href="#ds" x="-7.6" y="51"/><use href="#ds" x="11.2" y="51"/><use href="#ds" x="30" y="51"/><use href="#ds" x="48.8" y="51"/><use href="#ds" x="67.6" y="51"/><use href="#ds" x="86.4" y="51"/><use href="#ds" x="105.2" y="51"/><use href="#ds" x="124" y="51"/><use href="#ds" x="1.8" y="60.3"/><use href="#ds" x="20.6" y="60.3"/><use href="#ds" x="39.4" y="60.3"/><use href="#ds" x="58.2" y="60.3"/><use href="#ds" x="77" y="60.3"/><use href="#ds" x="95.8" y="60.3"/><use href="#ds" x="114.6" y="60.3"/><use href="#ds" x="-7.6" y="69.5"/><use href="#ds" x="11.2" y="69.5"/><use href="#ds" x="30" y="69.5"/><use href="#ds" x="48.8" y="69.5"/><use href="#ds" x="67.6" y="69.5"/><use href="#ds" x="86.4" y="69.5"/><use href="#ds" x="105.2" y="69.5"/><use href="#ds" x="124" y="69.5"/><use href="#ds" x="1.8" y="78.8"/><use href="#ds" x="20.6" y="78.8"/><use href="#ds" x="39.4" y="78.8"/><use href="#ds" x="58.2" y="78.8"/><use href="#ds" x="77" y="78.8"/><use href="#ds" x="95.8" y="78.8"/><use href="#ds" x="114.6" y="78.8"/><use href="#ds" x="-7.6" y="88"/><use href="#ds" x="11.2" y="88"/><use href="#ds" x="30" y="88"/><use href="#ds" x="48.8" y="88"/><use href="#ds" x="67.6" y="88"/><use href="#ds" x="86.4" y="88"/><use href="#ds" x="105.2" y="88"/><use href="#ds" x="124" y="88"/><use href="#ds" x="1.8" y="97.3"/><use href="#ds" x="20.6" y="97.3"/><use href="#ds" x="39.4" y="97.3"/><use href="#ds" x="58.2" y="97.3"/><use href="#ds" x="77" y="97.3"/><use href="#ds" x="95.8" y="97.3"/><use href="#ds" x="114.6" y="97.3"/><use href="#ds" x="-7.6" y="106.5"/><use href="#ds" x="11.2" y="106.5"/><use href="#ds" x="30" y="106.5"/><use href="#ds" x="48.8" y="106.5"/><use href="#ds" x="67.6" y="106.5"/><use href="#ds" x="86.4" y="106.5"/><use href="#ds" x="105.2" y="106.5"/><use href="#ds" x="124" y="106.5"/><use href="#ds" x="1.8" y="115.8"/><use href="#ds" x="20.6" y="115.8"/><use href="#ds" x="39.4" y="115.8"/><use href="#ds" x="58.2" y="115.8"/><use href="#ds" x="77" y="115.8"/><use href="#ds" x="95.8" y="115.8"/><use href="#ds" x="114.6" y="115.8"/><use href="#ds" x="-7.6" y="125"/><use href="#ds" x="11.2" y="125"/><use href="#ds" x="30" y="125"/><use href="#ds" x="48.8" y="125"/><use href="#ds" x="67.6" y="125"/><use href="#ds" x="86.4" y="125"/><use href="#ds" x="105.2" y="125"/><use href="#ds" x="124" y="125"/></svg></div>
<div class="img" style="left:665px;top:317.8px"><svg width="122" height="122" viewBox="0 0 122 122"><defs><g id="dn" fill="#d8d9d6"><ellipse cx="0" cy="-1" rx="0.8" ry="1.9"/><ellipse cx="-1.7" cy="0.2" rx="0.8" ry="1.5" transform="rotate(-45 -1.7 0.2)"/><ellipse cx="1.7" cy="0.2" rx="0.8" ry="1.5" transform="rotate(45 1.7 0.2)"/><path d="M-3.4 0.9L0 4L3.4 0.9" fill="none" stroke="#d8d9d6" stroke-width="0.8"/></g></defs><rect width="122" height="122" fill="#2a2c58"/><path d="M-235.5 0L-113.5 122M-225.2 0L-347.1 122M-223.4 0L-101.5 122M-213.1 0L-335.1 122M-211.3 0L-89.3 122M-200.9 0L-322.9 122M-199.2 0L-77.2 122M-188.8 0L-310.8 122M-187.1 0L-65.1 122M-176.8 0L-298.8 122M-175 0L-53 122M-164.7 0L-286.6 122M-162.9 0L-41 122M-152.6 0L-274.6 122M-150.8 0L-28.8 122M-140.4 0L-262.4 122M-138.7 0L-16.7 122M-128.3 0L-250.3 122M-126.6 0L-4.6 122M-116.2 0L-238.2 122M-114.5 0L7.5 122M-104.1 0L-226.1 122M-102.5 0L19.5 122M-92 0L-214.1 122M-90.4 0L31.6 122M-80 0L-201.9 122M-78.3 0L43.7 122M-67.9 0L-189.9 122M-66.1 0L55.9 122M-55.7 0L-177.8 122M-54.1 0L67.9 122M-43.6 0L-165.7 122M-42 0L80 122M-31.6 0L-153.6 122M-29.8 0L92.2 122M-19.4 0L-141.4 122M-17.8 0L104.2 122M-7.4 0L-129.3 122M-5.7 0L116.3 122M4.7 0L-117.2 122M6.4 0L128.4 122M16.8 0L-105.2 122M18.6 0L140.6 122M28.9 0L-93 122M30.6 0L152.6 122M41 0L-81 122M42.7 0L164.8 122M53.1 0L-68.8 122M54.8 0L176.8 122M65.2 0L-56.8 122M67 0L188.9 122M77.4 0L-44.6 122M79 0L201.1 122M89.5 0L-32.5 122M91.1 0L213.1 122M101.5 0L-20.5 122M103.2 0L225.2 122M113.6 0L-8.4 122M115.3 0L237.3 122M125.7 0L3.7 122M127.5 0L249.4 122M137.8 0L15.9 122M139.6 0L261.6 122M149.9 0L28 122M151.7 0L273.6 122M162 0L40 122M163.8 0L285.8 122M174.1 0L52.1 122M175.9 0L297.9 122M186.2 0L64.3 122M188 0L309.9 122M198.3 0L76.4 122M200.1 0L322.1 122M210.4 0L88.5 122M212.2 0L334.1 122M222.5 0L100.5 122M224.2 0L346.2 122M234.6 0L112.6 122M236.4 0L358.4 122M246.8 0L124.8 122M248.5 0L370.4 122M258.9 0L136.9 122M260.6 0L382.6 122M270.9 0L148.9 122M272.6 0L394.6 122M283 0L161 122M284.8 0L406.8 122M295.1 0L173.1 122M296.8 0L418.8 122M307.2 0L185.2 122" stroke="#b9bbca" stroke-width="0.65" fill="none"/><use href="#dn" x="-6.5" y="-6.9"/><use href="#dn" x="5.6" y="-6.9"/><use href="#dn" x="17.7" y="-6.9"/><use href="#dn" x="29.8" y="-6.9"/><use href="#dn" x="41.9" y="-6.9"/><use href="#dn" x="54" y="-6.9"/><use href="#dn" x="66.1" y="-6.9"/><use href="#dn" x="78.2" y="-6.9"/><use href="#dn" x="90.3" y="-6.9"/><use href="#dn" x="102.4" y="-6.9"/><use href="#dn" x="114.5" y="-6.9"/><use href="#dn" x="126.6" y="-6.9"/><use href="#dn" x="-0.5" y="-0.8"/><use href="#dn" x="11.6" y="-0.8"/><use href="#dn" x="23.8" y="-0.8"/><use href="#dn" x="35.8" y="-0.8"/><use href="#dn" x="47.9" y="-0.8"/><use href="#dn" x="60" y="-0.8"/><use href="#dn" x="72.1" y="-0.8"/><use href="#dn" x="84.2" y="-0.8"/><use href="#dn" x="96.3" y="-0.8"/><use href="#dn" x="108.4" y="-0.8"/><use href="#dn" x="120.5" y="-0.8"/><use href="#dn" x="-6.5" y="5.2"/><use href="#dn" x="5.6" y="5.2"/><use href="#dn" x="17.7" y="5.2"/><use href="#dn" x="29.8" y="5.2"/><use href="#dn" x="41.9" y="5.2"/><use href="#dn" x="54" y="5.2"/><use href="#dn" x="66.1" y="5.2"/><use href="#dn" x="78.2" y="5.2"/><use href="#dn" x="90.3" y="5.2"/><use href="#dn" x="102.4" y="5.2"/><use href="#dn" x="114.5" y="5.2"/><use href="#dn" x="126.6" y="5.2"/><use href="#dn" x="-0.5" y="11.2"/><use href="#dn" x="11.6" y="11.2"/><use href="#dn" x="23.8" y="11.2"/><use href="#dn" x="35.8" y="11.2"/><use href="#dn" x="47.9" y="11.2"/><use href="#dn" x="60" y="11.2"/><use href="#dn" x="72.1" y="11.2"/><use href="#dn" x="84.2" y="11.2"/><use href="#dn" x="96.3" y="11.2"/><use href="#dn" x="108.4" y="11.2"/><use href="#dn" x="120.5" y="11.2"/><use href="#dn" x="-6.5" y="17.3"/><use href="#dn" x="5.6" y="17.3"/><use href="#dn" x="17.7" y="17.3"/><use href="#dn" x="29.8" y="17.3"/><use href="#dn" x="41.9" y="17.3"/><use href="#dn" x="54" y="17.3"/><use href="#dn" x="66.1" y="17.3"/><use href="#dn" x="78.2" y="17.3"/><use href="#dn" x="90.3" y="17.3"/><use href="#dn" x="102.4" y="17.3"/><use href="#dn" x="114.5" y="17.3"/><use href="#dn" x="126.6" y="17.3"/><use href="#dn" x="-0.5" y="23.3"/><use href="#dn" x="11.6" y="23.3"/><use href="#dn" x="23.8" y="23.3"/><use href="#dn" x="35.8" y="23.3"/><use href="#dn" x="47.9" y="23.3"/><use href="#dn" x="60" y="23.3"/><use href="#dn" x="72.1" y="23.3"/><use href="#dn" x="84.2" y="23.3"/><use href="#dn" x="96.3" y="23.3"/><use href="#dn" x="108.4" y="23.3"/><use href="#dn" x="120.5" y="23.3"/><use href="#dn" x="-6.5" y="29.4"/><use href="#dn" x="5.6" y="29.4"/><use href="#dn" x="17.7" y="29.4"/><use href="#dn" x="29.8" y="29.4"/><use href="#dn" x="41.9" y="29.4"/><use href="#dn" x="54" y="29.4"/><use href="#dn" x="66.1" y="29.4"/><use href="#dn" x="78.2" y="29.4"/><use href="#dn" x="90.3" y="29.4"/><use href="#dn" x="102.4" y="29.4"/><use href="#dn" x="114.5" y="29.4"/><use href="#dn" x="126.6" y="29.4"/><use href="#dn" x="-0.5" y="35.5"/><use href="#dn" x="11.6" y="35.5"/><use href="#dn" x="23.8" y="35.5"/><use href="#dn" x="35.8" y="35.5"/><use href="#dn" x="47.9" y="35.5"/><use href="#dn" x="60" y="35.5"/><use href="#dn" x="72.1" y="35.5"/><use href="#dn" x="84.2" y="35.5"/><use href="#dn" x="96.3" y="35.5"/><use href="#dn" x="108.4" y="35.5"/><use href="#dn" x="120.5" y="35.5"/><use href="#dn" x="-6.5" y="41.5"/><use href="#dn" x="5.6" y="41.5"/><use href="#dn" x="17.7" y="41.5"/><use href="#dn" x="29.8" y="41.5"/><use href="#dn" x="41.9" y="41.5"/><use href="#dn" x="54" y="41.5"/><use href="#dn" x="66.1" y="41.5"/><use href="#dn" x="78.2" y="41.5"/><use href="#dn" x="90.3" y="41.5"/><use href="#dn" x="102.4" y="41.5"/><use href="#dn" x="114.5" y="41.5"/><use href="#dn" x="126.6" y="41.5"/><use href="#dn" x="-0.5" y="47.6"/><use href="#dn" x="11.6" y="47.6"/><use href="#dn" x="23.8" y="47.6"/><use href="#dn" x="35.8" y="47.6"/><use href="#dn" x="47.9" y="47.6"/><use href="#dn" x="60" y="47.6"/><use href="#dn" x="72.1" y="47.6"/><use href="#dn" x="84.2" y="47.6"/><use href="#dn" x="96.3" y="47.6"/><use href="#dn" x="108.4" y="47.6"/><use href="#dn" x="120.5" y="47.6"/><use href="#dn" x="-6.5" y="53.6"/><use href="#dn" x="5.6" y="53.6"/><use href="#dn" x="17.7" y="53.6"/><use href="#dn" x="29.8" y="53.6"/><use href="#dn" x="41.9" y="53.6"/><use href="#dn" x="54" y="53.6"/><use href="#dn" x="66.1" y="53.6"/><use href="#dn" x="78.2" y="53.6"/><use href="#dn" x="90.3" y="53.6"/><use href="#dn" x="102.4" y="53.6"/><use href="#dn" x="114.5" y="53.6"/><use href="#dn" x="126.6" y="53.6"/><use href="#dn" x="-0.5" y="59.6"/><use href="#dn" x="11.6" y="59.6"/><use href="#dn" x="23.8" y="59.6"/><use href="#dn" x="35.8" y="59.6"/><use href="#dn" x="47.9" y="59.6"/><use href="#dn" x="60" y="59.6"/><use href="#dn" x="72.1" y="59.6"/><use href="#dn" x="84.2" y="59.6"/><use href="#dn" x="96.3" y="59.6"/><use href="#dn" x="108.4" y="59.6"/><use href="#dn" x="120.5" y="59.6"/><use href="#dn" x="-6.5" y="65.7"/><use href="#dn" x="5.6" y="65.7"/><use href="#dn" x="17.7" y="65.7"/><use href="#dn" x="29.8" y="65.7"/><use href="#dn" x="41.9" y="65.7"/><use href="#dn" x="54" y="65.7"/><use href="#dn" x="66.1" y="65.7"/><use href="#dn" x="78.2" y="65.7"/><use href="#dn" x="90.3" y="65.7"/><use href="#dn" x="102.4" y="65.7"/><use href="#dn" x="114.5" y="65.7"/><use href="#dn" x="126.6" y="65.7"/><use href="#dn" x="-0.5" y="71.8"/><use href="#dn" x="11.6" y="71.8"/><use href="#dn" x="23.8" y="71.8"/><use href="#dn" x="35.8" y="71.8"/><use href="#dn" x="47.9" y="71.8"/><use href="#dn" x="60" y="71.8"/><use href="#dn" x="72.1" y="71.8"/><use href="#dn" x="84.2" y="71.8"/><use href="#dn" x="96.3" y="71.8"/><use href="#dn" x="108.4" y="71.8"/><use href="#dn" x="120.5" y="71.8"/><use href="#dn" x="-6.5" y="77.8"/><use href="#dn" x="5.6" y="77.8"/><use href="#dn" x="17.7" y="77.8"/><use href="#dn" x="29.8" y="77.8"/><use href="#dn" x="41.9" y="77.8"/><use href="#dn" x="54" y="77.8"/><use href="#dn" x="66.1" y="77.8"/><use href="#dn" x="78.2" y="77.8"/><use href="#dn" x="90.3" y="77.8"/><use href="#dn" x="102.4" y="77.8"/><use href="#dn" x="114.5" y="77.8"/><use href="#dn" x="126.6" y="77.8"/><use href="#dn" x="-0.5" y="83.8"/><use href="#dn" x="11.6" y="83.8"/><use href="#dn" x="23.8" y="83.8"/><use href="#dn" x="35.8" y="83.8"/><use href="#dn" x="47.9" y="83.8"/><use href="#dn" x="60" y="83.8"/><use href="#dn" x="72.1" y="83.8"/><use href="#dn" x="84.2" y="83.8"/><use href="#dn" x="96.3" y="83.8"/><use href="#dn" x="108.4" y="83.8"/><use href="#dn" x="120.5" y="83.8"/><use href="#dn" x="-6.5" y="89.9"/><use href="#dn" x="5.6" y="89.9"/><use href="#dn" x="17.7" y="89.9"/><use href="#dn" x="29.8" y="89.9"/><use href="#dn" x="41.9" y="89.9"/><use href="#dn" x="54" y="89.9"/><use href="#dn" x="66.1" y="89.9"/><use href="#dn" x="78.2" y="89.9"/><use href="#dn" x="90.3" y="89.9"/><use href="#dn" x="102.4" y="89.9"/><use href="#dn" x="114.5" y="89.9"/><use href="#dn" x="126.6" y="89.9"/><use href="#dn" x="-0.5" y="96"/><use href="#dn" x="11.6" y="96"/><use href="#dn" x="23.8" y="96"/><use href="#dn" x="35.8" y="96"/><use href="#dn" x="47.9" y="96"/><use href="#dn" x="60" y="96"/><use href="#dn" x="72.1" y="96"/><use href="#dn" x="84.2" y="96"/><use href="#dn" x="96.3" y="96"/><use href="#dn" x="108.4" y="96"/><use href="#dn" x="120.5" y="96"/><use href="#dn" x="-6.5" y="102"/><use href="#dn" x="5.6" y="102"/><use href="#dn" x="17.7" y="102"/><use href="#dn" x="29.8" y="102"/><use href="#dn" x="41.9" y="102"/><use href="#dn" x="54" y="102"/><use href="#dn" x="66.1" y="102"/><use href="#dn" x="78.2" y="102"/><use href="#dn" x="90.3" y="102"/><use href="#dn" x="102.4" y="102"/><use href="#dn" x="114.5" y="102"/><use href="#dn" x="126.6" y="102"/><use href="#dn" x="-0.5" y="108"/><use href="#dn" x="11.6" y="108"/><use href="#dn" x="23.8" y="108"/><use href="#dn" x="35.8" y="108"/><use href="#dn" x="47.9" y="108"/><use href="#dn" x="60" y="108"/><use href="#dn" x="72.1" y="108"/><use href="#dn" x="84.2" y="108"/><use href="#dn" x="96.3" y="108"/><use href="#dn" x="108.4" y="108"/><use href="#dn" x="120.5" y="108"/><use href="#dn" x="-6.5" y="114.1"/><use href="#dn" x="5.6" y="114.1"/><use href="#dn" x="17.7" y="114.1"/><use href="#dn" x="29.8" y="114.1"/><use href="#dn" x="41.9" y="114.1"/><use href="#dn" x="54" y="114.1"/><use href="#dn" x="66.1" y="114.1"/><use href="#dn" x="78.2" y="114.1"/><use href="#dn" x="90.3" y="114.1"/><use href="#dn" x="102.4" y="114.1"/><use href="#dn" x="114.5" y="114.1"/><use href="#dn" x="126.6" y="114.1"/><use href="#dn" x="-0.5" y="120.2"/><use href="#dn" x="11.6" y="120.2"/><use href="#dn" x="23.8" y="120.2"/><use href="#dn" x="35.8" y="120.2"/><use href="#dn" x="47.9" y="120.2"/><use href="#dn" x="60" y="120.2"/><use href="#dn" x="72.1" y="120.2"/><use href="#dn" x="84.2" y="120.2"/><use href="#dn" x="96.3" y="120.2"/><use href="#dn" x="108.4" y="120.2"/><use href="#dn" x="120.5" y="120.2"/><use href="#dn" x="-6.5" y="126.2"/><use href="#dn" x="5.6" y="126.2"/><use href="#dn" x="17.7" y="126.2"/><use href="#dn" x="29.8" y="126.2"/><use href="#dn" x="41.9" y="126.2"/><use href="#dn" x="54" y="126.2"/><use href="#dn" x="66.1" y="126.2"/><use href="#dn" x="78.2" y="126.2"/><use href="#dn" x="90.3" y="126.2"/><use href="#dn" x="102.4" y="126.2"/><use href="#dn" x="114.5" y="126.2"/><use href="#dn" x="126.6" y="126.2"/></svg></div>
<div class="a lbl" style="left:395px;top:440.8px">Lillian August LACEY SANTORINI</div>
<div class="a lbl" style="left:530px;top:440.8px">Lillian August DINAH SKYBLUE</div>
<div class="a lbl" style="left:665px;top:440.8px">Lillian August DINAH SANTORINI</div>

<div class="img" style="left:395px;top:477.5px"><svg width="122" height="122" viewBox="0 0 122 122"><defs><g id="gm"><g fill="#eef0d8" fill-opacity=".75" stroke="#eef0d8" stroke-width="1"><ellipse cy="-2.8" rx="2.7" ry="3.3"/><ellipse cx="-4" cy="1" rx="2.9" ry="2.5" transform="rotate(-30 -4 1)"/><ellipse cx="4" cy="1" rx="2.9" ry="2.5" transform="rotate(30 4 1)"/></g><path d="M0 -.5L1.8 2L0 4L-1.8 2Z" fill="#7f8f96"/><rect x="-.6" y="4.3" width="1.2" height="3" fill="#eef0d8"/><circle cy="10" r=".9" fill="#eef0d8"/></g></defs><rect width="122" height="122" fill="#a2bb82"/><use href="#gm" x="4.3" y="-0.5"/><use href="#gm" x="32.3" y="-0.5"/><use href="#gm" x="60.3" y="-0.5"/><use href="#gm" x="88.3" y="-0.5"/><use href="#gm" x="116.3" y="-0.5"/><use href="#gm" x="-9.7" y="11.6"/><use href="#gm" x="18.3" y="11.6"/><use href="#gm" x="46.3" y="11.6"/><use href="#gm" x="74.3" y="11.6"/><use href="#gm" x="102.3" y="11.6"/><use href="#gm" x="130.3" y="11.6"/><use href="#gm" x="4.3" y="23.7"/><use href="#gm" x="32.3" y="23.7"/><use href="#gm" x="60.3" y="23.7"/><use href="#gm" x="88.3" y="23.7"/><use href="#gm" x="116.3" y="23.7"/><use href="#gm" x="-9.7" y="35.8"/><use href="#gm" x="18.3" y="35.8"/><use href="#gm" x="46.3" y="35.8"/><use href="#gm" x="74.3" y="35.8"/><use href="#gm" x="102.3" y="35.8"/><use href="#gm" x="130.3" y="35.8"/><use href="#gm" x="4.3" y="47.9"/><use href="#gm" x="32.3" y="47.9"/><use href="#gm" x="60.3" y="47.9"/><use href="#gm" x="88.3" y="47.9"/><use href="#gm" x="116.3" y="47.9"/><use href="#gm" x="-9.7" y="60"/><use href="#gm" x="18.3" y="60"/><use href="#gm" x="46.3" y="60"/><use href="#gm" x="74.3" y="60"/><use href="#gm" x="102.3" y="60"/><use href="#gm" x="130.3" y="60"/><use href="#gm" x="4.3" y="72.1"/><use href="#gm" x="32.3" y="72.1"/><use href="#gm" x="60.3" y="72.1"/><use href="#gm" x="88.3" y="72.1"/><use href="#gm" x="116.3" y="72.1"/><use href="#gm" x="-9.7" y="84.2"/><use href="#gm" x="18.3" y="84.2"/><use href="#gm" x="46.3" y="84.2"/><use href="#gm" x="74.3" y="84.2"/><use href="#gm" x="102.3" y="84.2"/><use href="#gm" x="130.3" y="84.2"/><use href="#gm" x="4.3" y="96.3"/><use href="#gm" x="32.3" y="96.3"/><use href="#gm" x="60.3" y="96.3"/><use href="#gm" x="88.3" y="96.3"/><use href="#gm" x="116.3" y="96.3"/><use href="#gm" x="-9.7" y="108.4"/><use href="#gm" x="18.3" y="108.4"/><use href="#gm" x="46.3" y="108.4"/><use href="#gm" x="74.3" y="108.4"/><use href="#gm" x="102.3" y="108.4"/><use href="#gm" x="130.3" y="108.4"/><use href="#gm" x="4.3" y="120.5"/><use href="#gm" x="32.3" y="120.5"/><use href="#gm" x="60.3" y="120.5"/><use href="#gm" x="88.3" y="120.5"/><use href="#gm" x="116.3" y="120.5"/><use href="#gm" x="-9.7" y="132.6"/><use href="#gm" x="18.3" y="132.6"/><use href="#gm" x="46.3" y="132.6"/><use href="#gm" x="74.3" y="132.6"/><use href="#gm" x="102.3" y="132.6"/><use href="#gm" x="130.3" y="132.6"/></svg></div>
<div class="img" style="left:530px;top:477.5px"><svg width="122" height="122" viewBox="0 0 122 122"><defs><g id="d1"><g transform="scale(1.2 1.2)"><circle cy="-11" r="2.2" fill="#bcc198"/><circle cx="-3.6" cy="-7.6" r="2.4" fill="#bcc198"/><circle cx="3.6" cy="-7.6" r="2.4" fill="#bcc198"/><circle cy="-8" r="2.3" fill="#a6b0c6"/><path d="M-3.5 -6C-7 -5 -8.6 -1 -8.6 3C-8.6 7 -6 9.8 -2.2 10.5L0 12.8L2.2 10.5C6 9.8 8.6 7 8.6 3C8.6 -1 7 -5 3.5 -6C2 -6.5 -2 -6.5 -3.5 -6Z" fill="#a6b0c6"/><path d="M-8.6 3L-9.6 4.5L-8.2 6M8.6 3L9.6 4.5L8.2 6" stroke="#a6b0c6" stroke-width="1.2" fill="none"/><g fill="#dde2ec"><circle cx="-3.8" cy="-0.5" r="1.5"/><circle cx="3.8" cy="-0.5" r="1.5"/><circle cx="0" cy="-3.5" r="1.1"/><circle cx="0" cy="3.5" r="1.6"/><circle cx="-5.6" cy="4.8" r="1.1"/><circle cx="5.6" cy="4.8" r="1.1"/><circle cx="-2.2" cy="7.8" r="0.9"/><circle cx="2.2" cy="7.8" r="0.9"/><circle cx="-6.4" cy="0.8" r="0.8"/><circle cx="6.4" cy="0.8" r="0.8"/><circle cx="-1.8" cy="-5" r="0.7"/><circle cx="1.8" cy="-5" r="0.7"/><circle cx="-3" cy="4.5" r="0.8"/><circle cx="3" cy="4.5" r="0.8"/><circle cx="0" cy="0.5" r="0.7"/></g><path d="M0 -5V10M-6.5 1C-4 3 -2 3.5 0 7C2 3.5 4 3 6.5 1M-8 -1C-6 -3 -5 -4 -3.6 -6M8 -1C6 -3 5 -4 3.6 -6" stroke="#8c97b0" stroke-width=".8" fill="none"/></g></g><path id="d1d" d="M0 -2.1C1.6 -2.1 2.1 0.6 2.2 1.6H-2.2C-2.1 0.6 -1.6 -2.1 0 -2.1Z" fill="#aaa69c"/></defs><rect width="122" height="122" fill="#efede6"/><use href="#d1" x="-18.5" y="-3.4"/><use href="#d1" x="21.1" y="-3.4"/><use href="#d1" x="60.5" y="-3.4"/><use href="#d1" x="100" y="-3.4"/><use href="#d1" x="139.6" y="-3.4"/><use href="#d1" x="1.3" y="19.2"/><use href="#d1" x="40.8" y="19.2"/><use href="#d1" x="80.3" y="19.2"/><use href="#d1" x="119.8" y="19.2"/><use href="#d1" x="-18.5" y="41.8"/><use href="#d1" x="21.1" y="41.8"/><use href="#d1" x="60.5" y="41.8"/><use href="#d1" x="100" y="41.8"/><use href="#d1" x="139.6" y="41.8"/><use href="#d1" x="1.3" y="64.5"/><use href="#d1" x="40.8" y="64.5"/><use href="#d1" x="80.3" y="64.5"/><use href="#d1" x="119.8" y="64.5"/><use href="#d1" x="-18.5" y="87.1"/><use href="#d1" x="21.1" y="87.1"/><use href="#d1" x="60.5" y="87.1"/><use href="#d1" x="100" y="87.1"/><use href="#d1" x="139.6" y="87.1"/><use href="#d1" x="1.3" y="109.8"/><use href="#d1" x="40.8" y="109.8"/><use href="#d1" x="80.3" y="109.8"/><use href="#d1" x="119.8" y="109.8"/><use href="#d1" x="-18.5" y="132.4"/><use href="#d1" x="21.1" y="132.4"/><use href="#d1" x="60.5" y="132.4"/><use href="#d1" x="100" y="132.4"/><use href="#d1" x="139.6" y="132.4"/><use href="#d1d" x="21.1" y="16.7"/><use href="#d1d" x="60.5" y="16.7"/><use href="#d1d" x="100" y="16.7"/><use href="#d1d" x="1.3" y="39.3"/><use href="#d1d" x="40.8" y="39.3"/><use href="#d1d" x="80.3" y="39.3"/><use href="#d1d" x="119.8" y="39.3"/><use href="#d1d" x="21.1" y="62"/><use href="#d1d" x="60.5" y="62"/><use href="#d1d" x="100" y="62"/><use href="#d1d" x="1.3" y="84.6"/><use href="#d1d" x="40.8" y="84.6"/><use href="#d1d" x="80.3" y="84.6"/><use href="#d1d" x="119.8" y="84.6"/><use href="#d1d" x="21.1" y="107.3"/><use href="#d1d" x="60.5" y="107.3"/><use href="#d1d" x="100" y="107.3"/></svg></div>
<div class="img" style="left:665px;top:477.5px"><svg width="122" height="122" viewBox="0 0 122 122"><defs><g id="d2"><g transform="scale(1 1)"><circle cy="-11" r="2.2" fill="#36538f"/><circle cx="-3.6" cy="-7.6" r="2.4" fill="#36538f"/><circle cx="3.6" cy="-7.6" r="2.4" fill="#36538f"/><circle cy="-8" r="2.3" fill="#36538f"/><path d="M-3.5 -6C-7 -5 -8.6 -1 -8.6 3C-8.6 7 -6 9.8 -2.2 10.5L0 12.8L2.2 10.5C6 9.8 8.6 7 8.6 3C8.6 -1 7 -5 3.5 -6C2 -6.5 -2 -6.5 -3.5 -6Z" fill="#36538f"/><path d="M-8.6 3L-9.6 4.5L-8.2 6M8.6 3L9.6 4.5L8.2 6" stroke="#36538f" stroke-width="1.2" fill="none"/><g fill="#8aa5d0"><circle cx="-3.8" cy="-0.5" r="1.5"/><circle cx="3.8" cy="-0.5" r="1.5"/><circle cx="0" cy="-3.5" r="1.1"/><circle cx="0" cy="3.5" r="1.6"/><circle cx="-5.6" cy="4.8" r="1.1"/><circle cx="5.6" cy="4.8" r="1.1"/><circle cx="-2.2" cy="7.8" r="0.9"/><circle cx="2.2" cy="7.8" r="0.9"/><circle cx="-6.4" cy="0.8" r="0.8"/><circle cx="6.4" cy="0.8" r="0.8"/><circle cx="-1.8" cy="-5" r="0.7"/><circle cx="1.8" cy="-5" r="0.7"/><circle cx="-3" cy="4.5" r="0.8"/><circle cx="3" cy="4.5" r="0.8"/><circle cx="0" cy="0.5" r="0.7"/></g><path d="M0 -5V10M-6.5 1C-4 3 -2 3.5 0 7C2 3.5 4 3 6.5 1M-8 -1C-6 -3 -5 -4 -3.6 -6M8 -1C6 -3 5 -4 3.6 -6" stroke="#22376a" stroke-width=".8" fill="none"/></g></g><path id="d2d" d="M0 -1.8C1.4 -1.8 1.8 0.6 2 1.4H-2C-1.8 0.6 -1.4 -1.8 0 -1.8Z" fill="#3a5090"/></defs><rect width="122" height="122" fill="#ece6d8"/><use href="#d2" x="-5.3" y="-12.2"/><use href="#d2" x="26.7" y="-12.2"/><use href="#d2" x="58.7" y="-12.2"/><use href="#d2" x="90.7" y="-12.2"/><use href="#d2" x="122.7" y="-12.2"/><use href="#d2" x="10.7" y="5.5"/><use href="#d2" x="42.7" y="5.5"/><use href="#d2" x="74.7" y="5.5"/><use href="#d2" x="106.7" y="5.5"/><use href="#d2" x="138.7" y="5.5"/><use href="#d2" x="-5.3" y="23.2"/><use href="#d2" x="26.7" y="23.2"/><use href="#d2" x="58.7" y="23.2"/><use href="#d2" x="90.7" y="23.2"/><use href="#d2" x="122.7" y="23.2"/><use href="#d2" x="10.7" y="41"/><use href="#d2" x="42.7" y="41"/><use href="#d2" x="74.7" y="41"/><use href="#d2" x="106.7" y="41"/><use href="#d2" x="138.7" y="41"/><use href="#d2" x="-5.3" y="58.8"/><use href="#d2" x="26.7" y="58.8"/><use href="#d2" x="58.7" y="58.8"/><use href="#d2" x="90.7" y="58.8"/><use href="#d2" x="122.7" y="58.8"/><use href="#d2" x="10.7" y="76.5"/><use href="#d2" x="42.7" y="76.5"/><use href="#d2" x="74.7" y="76.5"/><use href="#d2" x="106.7" y="76.5"/><use href="#d2" x="138.7" y="76.5"/><use href="#d2" x="-5.3" y="94.2"/><use href="#d2" x="26.7" y="94.2"/><use href="#d2" x="58.7" y="94.2"/><use href="#d2" x="90.7" y="94.2"/><use href="#d2" x="122.7" y="94.2"/><use href="#d2" x="10.7" y="112"/><use href="#d2" x="42.7" y="112"/><use href="#d2" x="74.7" y="112"/><use href="#d2" x="106.7" y="112"/><use href="#d2" x="138.7" y="112"/><use href="#d2" x="-5.3" y="129.8"/><use href="#d2" x="26.7" y="129.8"/><use href="#d2" x="58.7" y="129.8"/><use href="#d2" x="90.7" y="129.8"/><use href="#d2" x="122.7" y="129.8"/><use href="#d2d" x="26.7" y="3"/><use href="#d2d" x="58.7" y="3"/><use href="#d2d" x="90.7" y="3"/><use href="#d2d" x="122.7" y="3"/><use href="#d2d" x="10.7" y="20.8"/><use href="#d2d" x="42.7" y="20.8"/><use href="#d2d" x="74.7" y="20.8"/><use href="#d2d" x="106.7" y="20.8"/><use href="#d2d" x="26.7" y="38.5"/><use href="#d2d" x="58.7" y="38.5"/><use href="#d2d" x="90.7" y="38.5"/><use href="#d2d" x="122.7" y="38.5"/><use href="#d2d" x="10.7" y="56.2"/><use href="#d2d" x="42.7" y="56.2"/><use href="#d2d" x="74.7" y="56.2"/><use href="#d2d" x="106.7" y="56.2"/><use href="#d2d" x="26.7" y="74"/><use href="#d2d" x="58.7" y="74"/><use href="#d2d" x="90.7" y="74"/><use href="#d2d" x="122.7" y="74"/><use href="#d2d" x="10.7" y="91.8"/><use href="#d2d" x="42.7" y="91.8"/><use href="#d2d" x="74.7" y="91.8"/><use href="#d2d" x="106.7" y="91.8"/><use href="#d2d" x="26.7" y="109.5"/><use href="#d2d" x="58.7" y="109.5"/><use href="#d2d" x="90.7" y="109.5"/><use href="#d2d" x="122.7" y="109.5"/></svg></div>

<div class="a" style="left:962.7px;top:525.6px;width:29.2px;height:29.2px;border-radius:50%;background:#fff;box-shadow:0 1px 3px rgba(0,0,0,.25)"></div>
<svg class="a" style="left:972px;top:535.5px" width="11" height="10" viewBox="0 0 11 10"><path d="M5.5 8.6V1.2M1.7 4.9L5.5 1.1L9.3 4.9" fill="none" stroke="#777" stroke-width="1.15"/></svg>

</body></html>
